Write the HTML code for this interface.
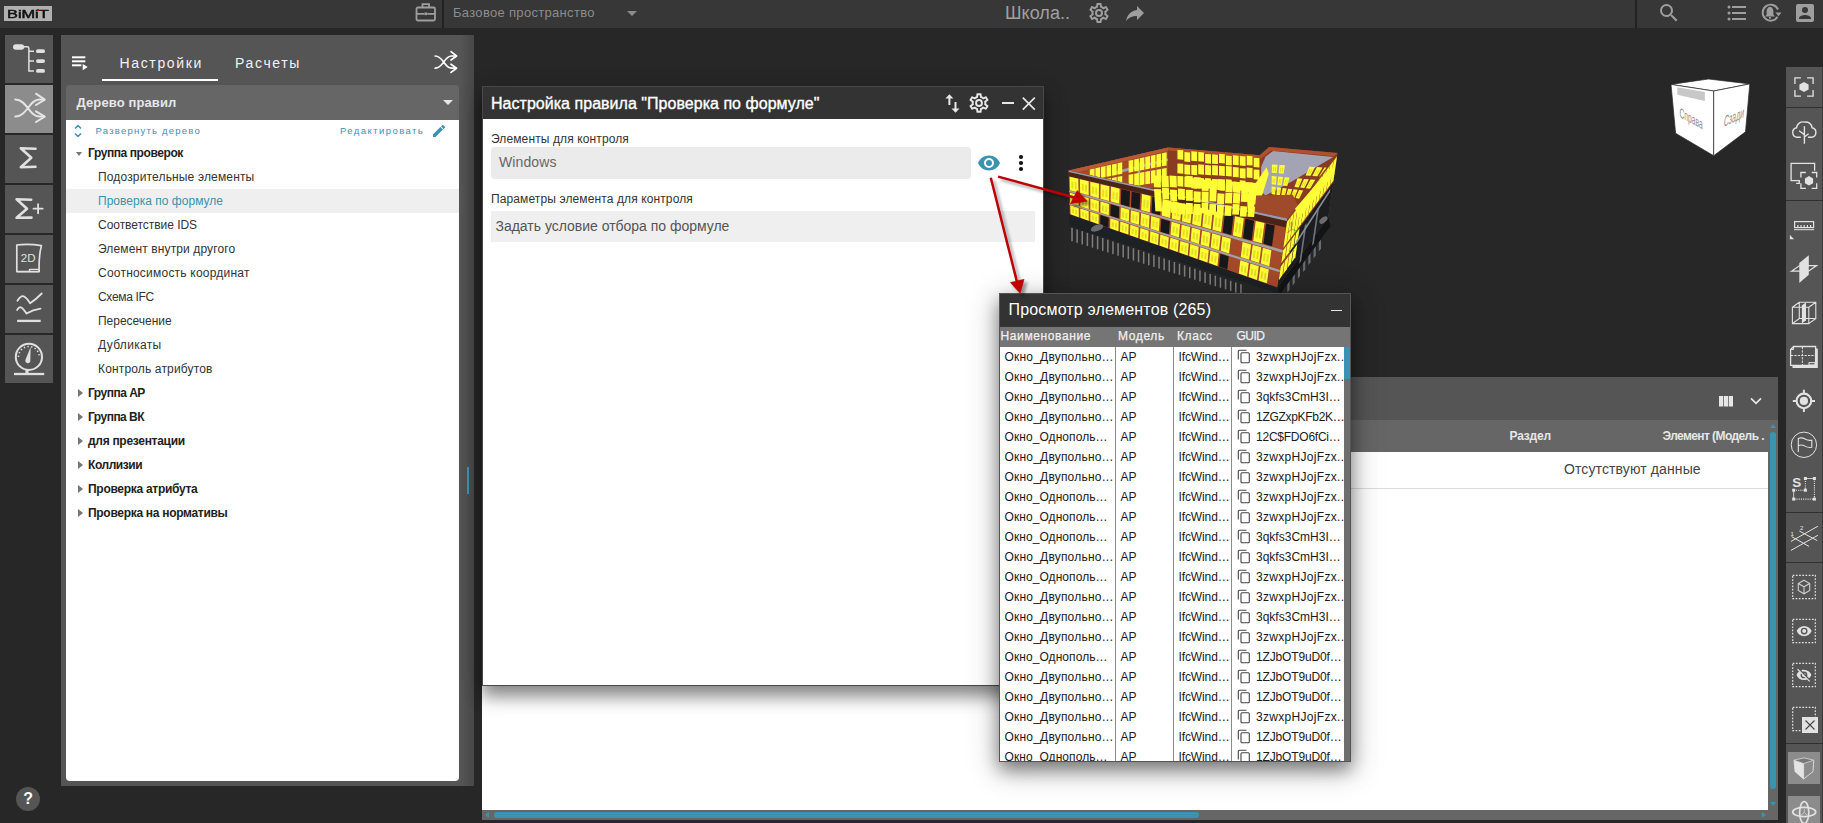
<!DOCTYPE html>
<html lang="ru">
<head>
<meta charset="utf-8">
<title>BIMIT</title>
<style>
*{box-sizing:border-box;margin:0;padding:0}
html,body{width:1823px;height:823px;overflow:hidden;background:#272727;font-family:"Liberation Sans",sans-serif;}
.abs{position:absolute}
.t{position:absolute;white-space:nowrap;line-height:1;transform-origin:0 50%}
#topbar{left:0;top:0;width:1823px;height:28px;background:#373737}
#logo{left:4px;top:6px;width:48px;height:15px;background:#b0b0b0;color:#111;overflow:hidden}
#logo span{position:absolute;left:3px;top:1.500px;font-size:11.500px;line-height:12px;transform:scaleX(1.42);transform-origin:0 0;-webkit-text-stroke:0.5px #111}
#logo i{position:absolute;left:32.700px;top:3.100px;width:2.300px;height:2.200px;background:#c80000}
.lbtn{position:absolute;left:5px;width:48px;height:48px;background:#555}
.lbtn.act{background:#8c8c8c}
#lpanel{left:61px;top:35px;width:413px;height:751px;background:#555}
#tree{left:66px;top:85px;width:393px;height:696px;background:linear-gradient(#666 0,#666 35px,#fff 35px);border-radius:4px;overflow:hidden}
#treehdr{left:0;top:0;width:393px;height:35px;background:#666}
.row{position:absolute;left:0;width:393px;height:24px}
.row.sel{background:#efefef}
.g{font-weight:bold;font-size:12px;color:#222;left:22px}
.i{font-size:12px;color:#333;left:32px}
.tri{position:absolute;left:11px;width:0;height:0;border-style:solid}
.tri.r{border-width:4px 0 4px 5px;border-color:transparent transparent transparent #757575;top:8px;left:12px}
.tri.d{border-width:4px 3.500px 0 3.500px;border-color:#757575 transparent transparent transparent;top:10.500px;left:9.500px}
#view{left:482px;top:28px;width:1305px;height:795px;overflow:hidden}
#dlg1{left:482px;top:86px;width:562px;height:600px;background:#fff;border:1px solid #484848;box-shadow:0 10px 16px rgba(0,0,0,.45),0 6px 28px 2px rgba(0,0,0,.08)}
#dlg1h{left:0;top:0;width:560px;height:31.500px;background:#333}
.fld{position:absolute;background:#ebebeb;border-radius:4px}
#dlg2{left:999px;top:293px;width:352px;height:469px;background:#fff;border:1px solid #555;box-shadow:0 8px 18px rgba(0,0,0,.5),0 6px 34px 4px rgba(0,0,0,.12);overflow:hidden}
#dlg2h{left:0;top:0;width:350px;height:33px;background:#333}
#dlg2c{left:0;top:33px;width:350px;height:20px;background:#757575}
#bpanel{left:482px;top:377px;width:1296px;height:446px;background:#555}
#rtb{left:1786px;top:67px;width:37px;height:756px;background:#555}
.ch{font-size:12px;color:#f0f0f0;-webkit-text-stroke:0.25px #f0f0f0}
.rc{font-size:12px;color:#1a1a1a}
#tx_base{letter-spacing:0.314px}
#tx_school{letter-spacing:0.047px}
#tx_tab1{letter-spacing:1.655px}
#tx_tab2{letter-spacing:1.633px}
#tx_treehdr{letter-spacing:0.111px}
#tx_expand{letter-spacing:1.230px}
#tx_edit{letter-spacing:1.430px}
#tx_r0{letter-spacing:-0.419px}
#tx_r1{letter-spacing:0.154px}
#tx_r2{letter-spacing:0.022px}
#tx_r3{letter-spacing:-0.041px}
#tx_r4{letter-spacing:0.123px}
#tx_r5{letter-spacing:0.221px}
#tx_r6{letter-spacing:-0.324px}
#tx_r7{letter-spacing:-0.026px}
#tx_r8{letter-spacing:0.323px}
#tx_r9{letter-spacing:0.154px}
#tx_r10{letter-spacing:-0.510px}
#tx_r11{letter-spacing:-0.513px}
#tx_r12{letter-spacing:-0.296px}
#tx_r13{letter-spacing:-0.443px}
#tx_r14{letter-spacing:-0.289px}
#tx_r15{letter-spacing:-0.300px}
#tx_d1title{letter-spacing:0.030px}
#tx_d1l1{letter-spacing:0.115px}
#tx_d1v1{letter-spacing:0.101px}
#tx_d1l2{letter-spacing:0.114px}
#tx_d1v2{letter-spacing:-0.013px}
#tx_d2title{letter-spacing:0.168px}
#tx_c1{letter-spacing:0.619px}
#tx_c2{letter-spacing:0.625px}
#tx_c3{letter-spacing:0.606px}
#tx_c4{letter-spacing:-0.500px}
.nD{letter-spacing:0.203px}
.nO{letter-spacing:0.077px}
.cI{letter-spacing:-0.116px}
.ga{letter-spacing:0.313px}
.gb{letter-spacing:0.009px}
.gc{letter-spacing:-0.293px}
.gd{letter-spacing:-0.233px}
.ge{letter-spacing:-0.143px}
#tx_b1{letter-spacing:-0.191px}
#tx_b2{letter-spacing:-0.584px}
#tx_b3{letter-spacing:0.111px}
</style>
</head>
<body>
<div class="abs" id="topbar"></div>
<div class="abs" id="logo"><span>BiMiT</span><i></i></div>
<!-- briefcase -->
<svg class="abs" style="left:415px;top:2px" width="22" height="20" viewBox="0 0 22 20" fill="none" stroke="#9e9e9e" stroke-width="1.8">
 <rect x="1.5" y="5.5" width="18.5" height="13" rx="1.5"/><path d="M7.5 5.5V2.2h6.5V5.5M1.5 11.8h7.5M12.500 11.8H20"/><rect x="9.3" y="10.5" width="3" height="2.6" fill="#9e9e9e" stroke="none"/>
</svg>
<div class="abs" style="left:442px;top:0;width:2px;height:28px;background:#222"></div>
<div class="t" id="tx_base" style="left:453px;top:6px;font-size:13px;color:#8c8c8c">Базовое пространство</div>
<div class="abs" style="left:627px;top:11px;width:0;height:0;border-style:solid;border-width:5px 5px 0 5px;border-color:#8c8c8c transparent transparent transparent"></div>
<div class="t" id="tx_school" style="left:1005px;top:4px;font-size:18px;color:#a0a0a0">Школа..</div>
<!-- gear top -->
<svg class="abs" style="left:1087px;top:1px" width="24" height="24" viewBox="0 0 24 24" fill="#9e9e9e"><path d="M12 8a4 4 0 0 1 4 4 4 4 0 0 1-4 4 4 4 0 0 1-4-4 4 4 0 0 1 4-4m0 2a2 2 0 0 0-2 2 2 2 0 0 0 2 2 2 2 0 0 0 2-2 2 2 0 0 0-2-2m-2 12c-.25 0-.46-.18-.5-.42l-.37-2.650c-.63-.25-1.170-.59-1.690-.99l-2.490 1.010c-.22.080-.49 0-.61-.22l-2-3.460c-.130-.22-.070-.49.120-.64l2.110-1.660L4.500 12l.070-1-2.110-1.630c-.190-.150-.25-.42-.120-.64l2-3.460c.120-.22.390-.31.610-.22l2.490 1c.52-.39 1.060-.73 1.690-.98l.37-2.650c.04-.24.25-.42.500-.42h4c.25 0 .46.180.5.420l.37 2.650c.63.250 1.170.59 1.690.98l2.490-1c.22-.09.490 0 .61.220l2 3.460c.130.220.070.490-.12.640L19.430 11l.07 1-.07 1 2.110 1.630c.190.150.25.420.12.640l-2 3.460c-.12.220-.39.310-.61.220l-2.490-1c-.52.390-1.060.730-1.690.98l-.37 2.650c-.04.240-.25.420-.5.420h-4m1.250-18l-.37 2.610c-1.200.25-2.260.89-3.030 1.780L5.440 7.350l-.75 1.300L6.800 10.200a5.550 5.550 0 0 0 0 3.600l-2.120 1.560.75 1.300 2.430-1.040c.77.880 1.820 1.520 3.010 1.760l.37 2.620h1.520l.37-2.610c1.190-.25 2.240-.89 3.010-1.770l2.430 1.040.75-1.300-2.120-1.550c.4-1.170.4-2.440 0-3.610l2.110-1.550-.75-1.300-2.410 1.040a5.420 5.420 0 0 0-3.030-1.770L12.750 4h-1.500z"/></svg>
<!-- share -->
<svg class="abs" style="left:1123px;top:2px" width="24" height="24" viewBox="0 0 24 24" fill="#9e9e9e"><path d="M21 11l-7-7v4C7 9 4 14 3 19c2.500-3.500 6-5.100 11-5.100V18l7-7z"/></svg>
<div class="abs" style="left:1635px;top:0;width:2px;height:28px;background:#222"></div>
<!-- search -->
<svg class="abs" style="left:1657px;top:1px" width="24" height="24" viewBox="0 0 24 24" fill="#9e9e9e"><path d="M9.500 3A6.500 6.500 0 0 1 16 9.500c0 1.610-.59 3.090-1.560 4.230l.27.270h.79l5 5-1.500 1.500-5-5v-.79l-.27-.27A6.516 6.516 0 0 1 9.500 16 6.500 6.500 0 0 1 3 9.500 6.500 6.500 0 0 1 9.500 3m0 2C7 5 5 7 5 9.500S7 14 9.500 14 14 12 14 9.500 12 5 9.500 5z"/></svg>
<!-- list -->
<svg class="abs" style="left:1725px;top:1px" width="24" height="24" viewBox="0 0 24 24" fill="#9e9e9e"><path d="M7 5h14v2H7V5m0 8v-2h14v2H7M4 4.500A1.500 1.500 0 0 1 5.500 6 1.500 1.500 0 0 1 4 7.500 1.500 1.500 0 0 1 2.500 6 1.500 1.500 0 0 1 4 4.500m0 6A1.500 1.500 0 0 1 5.500 12 1.500 1.500 0 0 1 4 13.500 1.500 1.500 0 0 1 2.500 12 1.500 1.500 0 0 1 4 10.500M7 19v-2h14v2H7m-3-2.500A1.500 1.500 0 0 1 5.500 18 1.500 1.500 0 0 1 4 19.500 1.500 1.500 0 0 1 2.500 18 1.500 1.500 0 0 1 4 16.500z"/></svg>
<!-- bell refresh -->
<svg class="abs" style="left:1759px;top:1px" width="24" height="24" viewBox="0 0 24 24" fill="none" stroke="#9e9e9e"><path d="M18.500 15.800A8 8 0 1 1 19 8.500" stroke-width="1.900"/><path d="M16.500 11.500h6l-3 3.800z" fill="#9e9e9e" stroke="none"/><path d="M11 5.800c-2.400.5-3.400 2.300-3.400 4.700v3.200L6.400 15v.6h9.200V15l-1.200-1.300v-3.200c0-2.400-1-4.200-3.400-4.700z" fill="#9e9e9e" stroke="none"/><circle cx="11" cy="16.800" r="1.100" fill="#9e9e9e" stroke="none"/></svg>
<!-- account -->
<svg class="abs" style="left:1793px;top:1px" width="24" height="24" viewBox="0 0 24 24" fill="#9e9e9e"><path d="M6 17c0-2 4-3.100 6-3.100s6 1.100 6 3.100v1H6m9-9a3 3 0 0 1-3 3 3 3 0 0 1-3-3 3 3 0 0 1 3-3 3 3 0 0 1 3 3M3 5v14a2 2 0 0 0 2 2h14a2 2 0 0 0 2-2V5a2 2 0 0 0-2-2H5a2 2 0 0 0-2 2z"/></svg>

<!-- LEFT TOOLBAR -->
<div class="lbtn" style="top:35px"><svg width="48" height="48" viewBox="0 0 48 48" fill="none" stroke="#e0e0e0" stroke-width="1.5">
 <rect x="8" y="9.200" width="11.200" height="5.600" rx="2.800" fill="#e0e0e0" stroke="none"/>
 <path d="M18 11.800h4.300q1.600 0 1.600 1.600V36h5M24 16.200h5M24 26.100h5"/>
 <rect x="31" y="14.300" width="9" height="3.700" rx="1.850" fill="#e0e0e0" stroke="none"/>
 <rect x="31" y="24.200" width="9" height="3.700" rx="1.850" fill="#e0e0e0" stroke="none"/>
 <rect x="31" y="34.100" width="9" height="3.700" rx="1.850" fill="#e0e0e0" stroke="none"/>
</svg></div>
<div class="lbtn act" style="top:85px"><svg width="48" height="48" viewBox="0 0 48 48" fill="none" stroke="#e4e4e4" stroke-width="2" stroke-linecap="round" stroke-linejoin="round">
 <path d="M10.300 14.600C22 14.600 24 31.600 34.500 31.600H39M10.300 31.600C22 31.600 24 14.600 34.500 14.600H39"/>
 <path d="M31 8.700l8.800 5.900L31 20M31 26.300l8.800 5.300L31 37"/>
</svg></div>
<div class="lbtn" style="top:135px"><svg width="48" height="48" viewBox="0 0 48 48" fill="none" stroke="#e0e0e0" stroke-width="2.600" stroke-linecap="round" stroke-linejoin="round">
 <path d="M30.500 13.800L15.800 13.300L26.300 22.700L15.800 32.200L30.500 31.800"/>
</svg></div>
<div class="lbtn" style="top:185px"><svg width="48" height="48" viewBox="0 0 48 48" fill="none" stroke="#e0e0e0" stroke-width="2.600" stroke-linecap="round" stroke-linejoin="round">
 <path d="M26.200 14.700L11.600 14.200L22 23.700L11.600 32.800L26.500 32.600"/>
 <path d="M28.500 23.700h9.200M33.100 19.100v9.200" stroke-width="1.800"/>
</svg></div>
<div class="lbtn" style="top:235px"><svg width="48" height="48" viewBox="0 0 48 48" fill="none" stroke="#e0e0e0" stroke-width="1.700" stroke-linejoin="round">
 <path d="M11.800 10q12-1.400 24.600.6c-2 8-2.600 17-2.200 26H11.800z"/>
 <path d="M12 36.600h22M24.500 36v-1.600h9.500" stroke-width="1.400"/>
 <text x="15.800" y="27" font-family="Liberation Sans, sans-serif" font-size="11.500" fill="#e0e0e0" stroke="none">2D</text>
</svg></div>
<div class="lbtn" style="top:285px"><svg width="48" height="48" viewBox="0 0 48 48" fill="none" stroke="#e0e0e0" stroke-width="1.800" stroke-linecap="round" stroke-linejoin="round">
 <path d="M12.400 15.800q3.500-5.500 6.300-4.500t6.400 7q6-4 11.600-9.800"/>
 <path d="M12.100 25q2.200-3.600 4.200-2.500t5.200 6.100q6.500-4 14-4.900"/>
 <path d="M12.100 35.900h23.600" stroke-width="2.300" stroke-linecap="butt"/>
</svg></div>
<div class="lbtn" style="top:335px"><svg width="48" height="48" viewBox="0 0 48 48" fill="none" stroke="#e0e0e0" stroke-width="2">
 <circle cx="23.900" cy="21.900" r="13.100"/>
 <path d="M9 39h30.200" stroke-width="2.300"/>
 <path d="M22 35v4" stroke-width="3.200"/>
 <path d="M13.500 21.900A10.400 10.400 0 0 1 34.300 21.900" stroke-width="1.600" stroke-dasharray="1.300 2.400" transform="rotate(0 23.900 21.900)"/>
 <path d="M25.600 12L20.300 25.300a2.600 2.600 0 0 0 5 1.300z" fill="#e0e0e0" stroke="none"/>
</svg></div>
<!-- HELP -->
<div class="abs" style="left:16px;top:787px;width:24.200px;height:24.200px;border-radius:50%;background:#555"></div>
<div class="t" style="left:23.200px;top:791px;font-size:16px;font-weight:bold;color:#fff">?</div>
<!-- LEFT PANEL -->
<div class="abs" id="lpanel"><div class="abs" style="left:399px;top:0;width:14px;height:751px;background:linear-gradient(90deg,rgba(0,0,0,0),rgba(0,0,0,.16))"></div></div>
<svg class="abs" style="left:71px;top:55px" width="18" height="16" viewBox="0 0 18 16" fill="#fff"><rect x="1" y="1.300" width="13.300" height="2"/><rect x="1" y="5.300" width="13.300" height="2"/><rect x="1" y="9.300" width="9.300" height="2"/><path d="M11.700 9v6.200l5-3.100z"/></svg>
<div class="t" id="tx_tab1" style="left:119.500px;top:56px;font-size:14px;color:#f2f2f2">Настройки</div>
<div class="t" id="tx_tab2" style="left:235px;top:56px;font-size:14px;color:#f2f2f2">Расчеты</div>
<div class="abs" style="left:102px;top:79px;width:116px;height:2px;background:#fff"></div>
<svg class="abs" style="left:432px;top:50px" width="28" height="26" viewBox="0 0 28 26" fill="none" stroke="#fff" stroke-width="1.700" stroke-linecap="round" stroke-linejoin="round"><path d="M3.200 6C11.500 6 12 18.200 19.500 18.200h4.500M3.200 18.200C11.500 18.200 12 6 19.500 6h4.500"/><path d="M19 1.700l5.600 4.300L19 10M19 14.200l5.600 4L19 22.400"/></svg>
<div class="abs" style="left:467.300px;top:466.500px;width:1.700px;height:27.500px;background:#3a93b0"></div>
<div class="abs" id="tree">
  <div class="abs" id="treehdr"></div>
  <div class="t" id="tx_treehdr" style="left:10.500px;top:11px;font-size:13px;font-weight:bold;color:#e6e6e6">Дерево правил</div>
  <div class="abs" style="left:376.500px;top:15px;width:0;height:0;border-style:solid;border-width:5px 5px 0 5px;border-color:#e6e6e6 transparent transparent transparent"></div>
  <svg class="abs" style="left:6px;top:38px" width="12" height="16" viewBox="0 0 12 16" fill="none" stroke="#3a93b0" stroke-width="1.500"><path d="M3 5.500L6 2.600l3 2.900M3 10.500l3 2.900 3-2.900"/></svg>
  <div class="t" id="tx_expand" style="left:29.500px;top:41px;font-size:9.500px;color:#3a93b0">Развернуть дерево</div>
  <div class="t" id="tx_edit" style="left:274px;top:41px;font-size:9.500px;color:#3a93b0">Редактировать</div>
  <svg class="abs" style="left:365px;top:38px" width="16" height="16" viewBox="0 0 24 24" fill="#3a93b0"><path d="M20.710 7.040c.39-.39.390-1.040 0-1.410l-2.340-2.340c-.37-.39-1.020-.39-1.410 0l-1.840 1.830 3.750 3.750M3 17.250V21h3.750L17.810 9.930l-3.750-3.750L3 17.250z"/></svg>
  <div class="row" style="top:56px"><i class="tri d"></i><div class="t g" id="tx_r0" style="top:6px">Группа проверок</div></div>
  <div class="row" style="top:80px"><div class="t i" id="tx_r1" style="top:6px">Подозрительные элементы</div></div>
  <div class="row sel" style="top:104px"><div class="t i" id="tx_r2" style="top:6px;color:#3a93b0">Проверка по формуле</div></div>
  <div class="row" style="top:128px"><div class="t i" id="tx_r3" style="top:6px">Соответствие IDS</div></div>
  <div class="row" style="top:152px"><div class="t i" id="tx_r4" style="top:6px">Элемент внутри другого</div></div>
  <div class="row" style="top:176px"><div class="t i" id="tx_r5" style="top:6px">Соотносимость координат</div></div>
  <div class="row" style="top:200px"><div class="t i" id="tx_r6" style="top:6px">Схема IFC</div></div>
  <div class="row" style="top:224px"><div class="t i" id="tx_r7" style="top:6px">Пересечение</div></div>
  <div class="row" style="top:248px"><div class="t i" id="tx_r8" style="top:6px">Дубликаты</div></div>
  <div class="row" style="top:272px"><div class="t i" id="tx_r9" style="top:6px">Контроль атрибутов</div></div>
  <div class="row" style="top:296px"><i class="tri r"></i><div class="t g" id="tx_r10" style="top:6px">Группа АР</div></div>
  <div class="row" style="top:320px"><i class="tri r"></i><div class="t g" id="tx_r11" style="top:6px">Группа ВК</div></div>
  <div class="row" style="top:344px"><i class="tri r"></i><div class="t g" id="tx_r12" style="top:6px">для презентации</div></div>
  <div class="row" style="top:368px"><i class="tri r"></i><div class="t g" id="tx_r13" style="top:6px">Коллизии</div></div>
  <div class="row" style="top:392px"><i class="tri r"></i><div class="t g" id="tx_r14" style="top:6px">Проверка атрибута</div></div>
  <div class="row" style="top:416px"><i class="tri r"></i><div class="t g" id="tx_r15" style="top:6px">Проверка на нормативы</div></div>
</div>
<!-- 3D MODEL -->
<svg class="abs" style="left:1050px;top:130px;filter:blur(.3px)" width="310" height="180" viewBox="0 0 1417 823">
<rect x="97.0" y="446.7" width="7" height="62.0" fill="#7d7d7d"/>
<rect x="120.4" y="454.5" width="7" height="61.5" fill="#7d7d7d"/>
<rect x="143.8" y="462.3" width="7" height="61.0" fill="#7d7d7d"/>
<rect x="167.2" y="470.2" width="7" height="60.5" fill="#7d7d7d"/>
<rect x="190.6" y="478.0" width="7" height="60.0" fill="#7d7d7d"/>
<rect x="214.0" y="485.9" width="7" height="59.5" fill="#7d7d7d"/>
<rect x="237.4" y="493.7" width="7" height="59.0" fill="#7d7d7d"/>
<rect x="260.8" y="501.5" width="7" height="58.5" fill="#7d7d7d"/>
<rect x="284.2" y="509.4" width="7" height="58.0" fill="#7d7d7d"/>
<rect x="307.6" y="517.2" width="7" height="57.5" fill="#7d7d7d"/>
<rect x="331.0" y="525.1" width="7" height="57.0" fill="#7d7d7d"/>
<rect x="354.4" y="532.9" width="7" height="56.5" fill="#7d7d7d"/>
<rect x="377.8" y="540.7" width="7" height="56.0" fill="#7d7d7d"/>
<rect x="401.2" y="548.6" width="7" height="55.5" fill="#7d7d7d"/>
<rect x="424.6" y="556.4" width="7" height="55.0" fill="#7d7d7d"/>
<rect x="448.0" y="564.3" width="7" height="54.5" fill="#7d7d7d"/>
<rect x="471.4" y="572.1" width="7" height="54.0" fill="#7d7d7d"/>
<rect x="494.8" y="579.9" width="7" height="53.5" fill="#7d7d7d"/>
<rect x="518.2" y="587.8" width="7" height="53.0" fill="#7d7d7d"/>
<rect x="541.6" y="595.6" width="7" height="52.5" fill="#7d7d7d"/>
<rect x="565.0" y="603.5" width="7" height="52.0" fill="#7d7d7d"/>
<rect x="588.4" y="611.3" width="7" height="51.5" fill="#7d7d7d"/>
<rect x="611.8" y="619.1" width="7" height="51.0" fill="#7d7d7d"/>
<rect x="635.2" y="627.0" width="7" height="50.5" fill="#7d7d7d"/>
<rect x="658.6" y="634.8" width="7" height="50.0" fill="#7d7d7d"/>
<rect x="682.0" y="642.6" width="7" height="49.5" fill="#7d7d7d"/>
<rect x="705.4" y="650.5" width="7" height="49.0" fill="#7d7d7d"/>
<rect x="728.8" y="658.3" width="7" height="48.5" fill="#7d7d7d"/>
<rect x="752.2" y="666.2" width="7" height="48.0" fill="#7d7d7d"/>
<rect x="775.6" y="674.0" width="7" height="47.5" fill="#7d7d7d"/>
<rect x="799.0" y="681.8" width="7" height="47.0" fill="#7d7d7d"/>
<rect x="822.4" y="689.7" width="7" height="46.5" fill="#7d7d7d"/>
<rect x="845.8" y="697.5" width="7" height="46.0" fill="#7d7d7d"/>
<rect x="869.2" y="705.4" width="7" height="45.5" fill="#7d7d7d"/>
<polygon points="1085.0,700.0 1095.0,687.0 1095.0,730.0 1085.0,743.0" fill="#6a6d72"/>
<polygon points="1109.0,668.8 1119.0,655.8 1119.0,698.8 1109.0,711.8" fill="#6a6d72"/>
<polygon points="1133.0,637.6 1143.0,624.6 1143.0,667.6 1133.0,680.6" fill="#6a6d72"/>
<polygon points="1157.0,606.4 1167.0,593.4 1167.0,636.4 1157.0,649.4" fill="#6a6d72"/>
<polygon points="1181.0,575.2 1191.0,562.2 1191.0,605.2 1181.0,618.2" fill="#6a6d72"/>
<polygon points="1205.0,544.0 1215.0,531.0 1215.0,574.0 1205.0,587.0" fill="#6a6d72"/>
<polygon points="1229.0,512.8 1239.0,499.8 1239.0,542.8 1229.0,555.8" fill="#6a6d72"/>
<polygon points="86.0,383.0 1040.0,716.0 1052.0,750.0 92.0,442.0" fill="#1e2124"/>
<polygon points="1040.0,716.0 1272.0,398.0 1282.0,440.0 1052.0,750.0" fill="#121416"/>
<polygon points="540.0,80.0 958.0,116.0 1002.0,78.0 1315.0,105.0 1085.0,405.0 85.0,185.0" fill="#8a3c22"/>
<polygon points="985.0,122.0 1020.0,96.0 1295.0,124.0 1105.0,235.0 985.0,300.0 930.0,250.0" fill="#a3a3b4"/>
<polygon points="85.0,185.0 540.0,80.0 540.0,250.0 100.0,330.0" fill="#a4492a"/>
<polygon points="85.0,185.0 540.0,80.0 548.0,93.0 96.0,199.0" fill="#b85a36"/>
<polygon points="290.0,190.0 540.0,130.0 540.0,142.0 290.0,204.0" fill="#9d9db0"/>
<polygon points="400.0,150.0 412.0,148.0 412.0,260.0 400.0,262.0" fill="#9d9db0"/>
<polygon points="540.0,80.0 965.0,116.0 965.0,300.0 540.0,250.0" fill="#8a3c22"/>
<polygon points="540.0,80.0 958.0,116.0 1002.0,78.0 1315.0,105.0 1300.0,120.0 1010.0,94.0 965.0,130.0 540.0,94.0" fill="#b0502e"/>
<polygon points="182.0,180.2 203.3,175.5 203.3,224.5 182.0,228.6" fill="#ffff38"/>
<polygon points="207.4,174.6 228.7,169.8 228.7,219.7 207.4,223.8" fill="#ffff38"/>
<polygon points="232.7,168.9 254.0,164.1 254.0,215.0 232.7,219.0" fill="#ffff38"/>
<polygon points="258.1,163.2 279.4,158.4 279.4,210.2 258.1,214.2" fill="#ffff38"/>
<polygon points="283.5,157.5 304.8,152.7 304.8,205.4 283.5,209.4" fill="#ffff38"/>
<polygon points="308.8,151.8 330.1,147.0 330.1,200.6 308.8,204.6" fill="#ffff38"/>
<polygon points="359.5,140.4 380.8,135.6 380.8,191.0 359.5,195.0" fill="#ffff38"/>
<polygon points="384.9,134.7 406.2,129.9 406.2,186.2 384.9,190.2" fill="#ffff38"/>
<polygon points="410.2,129.0 431.5,124.2 431.5,181.4 410.2,185.4" fill="#ffff38"/>
<polygon points="435.6,123.3 456.9,118.5 456.9,176.6 435.6,180.6" fill="#ffff38"/>
<polygon points="461.0,117.6 482.3,112.8 482.3,171.8 461.0,175.8" fill="#ffff38"/>
<polygon points="486.3,111.9 507.6,107.1 507.6,167.0 486.3,171.0" fill="#ffff38"/>
<polygon points="511.7,106.2 533.0,101.5 533.0,162.2 511.7,166.2" fill="#ffff38"/>
<polygon points="182.0,237.5 203.3,233.6 203.3,282.7 182.0,285.8" fill="#ffff38"/>
<polygon points="207.4,232.8 228.7,229.0 228.7,278.9 207.4,282.1" fill="#ffff38"/>
<polygon points="232.7,228.2 254.0,224.3 254.0,275.2 232.7,278.3" fill="#ffff38"/>
<polygon points="258.1,223.6 279.4,219.7 279.4,271.5 258.1,274.6" fill="#ffff38"/>
<polygon points="283.5,219.0 304.8,215.1 304.8,267.7 283.5,270.9" fill="#ffff38"/>
<polygon points="308.8,214.3 330.1,210.4 330.1,264.0 308.8,267.1" fill="#ffff38"/>
<polygon points="359.5,205.1 380.8,201.2 380.8,256.5 359.5,259.7" fill="#ffff38"/>
<polygon points="384.9,200.4 406.2,196.5 406.2,252.8 384.9,255.9" fill="#ffff38"/>
<polygon points="410.2,195.8 431.5,191.9 431.5,249.0 410.2,252.2" fill="#ffff38"/>
<polygon points="435.6,191.2 456.9,187.3 456.9,245.3 435.6,248.4" fill="#ffff38"/>
<polygon points="461.0,186.5 482.3,182.6 482.3,241.6 461.0,244.7" fill="#ffff38"/>
<polygon points="486.3,181.9 507.6,178.0 507.6,237.8 486.3,241.0" fill="#ffff38"/>
<polygon points="511.7,177.3 533.0,173.4 533.0,234.1 511.7,237.2" fill="#ffff38"/>
<polygon points="582.5,90.9 609.1,93.0 609.1,136.0 582.5,133.9" fill="#ffff38"/>
<polygon points="614.2,100.9 640.8,103.0 640.8,146.0 614.2,143.9" fill="#ffff38"/>
<polygon points="645.9,97.7 672.5,99.8 672.5,142.8 645.9,140.7" fill="#ffff38"/>
<polygon points="677.5,100.3 704.1,102.4 704.1,145.4 677.5,143.3" fill="#ffff38"/>
<polygon points="709.2,109.3 735.8,111.4 735.8,154.4 709.2,152.3" fill="#ffff38"/>
<polygon points="740.9,110.9 767.5,113.0 767.5,156.0 740.9,153.9" fill="#ffff38"/>
<polygon points="772.5,108.4 799.1,110.5 799.1,153.5 772.5,151.4" fill="#ffff38"/>
<polygon points="804.2,116.7 830.8,118.8 830.8,161.8 804.2,159.7" fill="#ffff38"/>
<polygon points="835.9,115.5 862.5,117.6 862.5,160.6 835.9,158.5" fill="#ffff38"/>
<polygon points="867.5,119.2 894.1,121.3 894.1,164.3 867.5,162.2" fill="#ffff38"/>
<polygon points="899.2,117.7 925.8,119.8 925.8,162.8 899.2,160.7" fill="#ffff38"/>
<polygon points="930.9,126.5 957.5,128.6 957.5,171.6 930.9,169.5" fill="#ffff38"/>
<polygon points="582.5,152.7 609.1,154.8 609.1,200.0 582.5,197.9" fill="#ffff38"/>
<polygon points="614.2,157.6 640.8,159.7 640.8,204.9 614.2,202.8" fill="#ffff38"/>
<polygon points="645.9,159.5 672.5,161.6 672.5,206.7 645.9,204.6" fill="#ffff38"/>
<polygon points="677.5,156.9 704.1,159.0 704.1,204.1 677.5,202.0" fill="#ffff38"/>
<polygon points="709.2,159.9 735.8,162.0 735.8,207.2 709.2,205.1" fill="#ffff38"/>
<polygon points="740.9,160.7 767.5,162.8 767.5,208.0 740.9,205.9" fill="#ffff38"/>
<polygon points="772.5,163.1 799.1,165.2 799.1,210.3 772.5,208.2" fill="#ffff38"/>
<polygon points="804.2,164.9 830.8,167.0 830.8,212.1 804.2,210.0" fill="#ffff38"/>
<polygon points="835.9,169.4 862.5,171.5 862.5,216.6 835.9,214.5" fill="#ffff38"/>
<polygon points="867.5,174.5 894.1,176.6 894.1,221.7 867.5,219.6" fill="#ffff38"/>
<polygon points="899.2,171.8 925.8,173.9 925.8,219.1 899.2,217.0" fill="#ffff38"/>
<polygon points="930.9,180.1 957.5,182.2 957.5,227.4 930.9,225.3" fill="#ffff38"/>
<polygon points="582.5,209.9 609.1,212.0 609.1,259.3 582.5,257.2" fill="#ffff38"/>
<polygon points="614.2,212.2 640.8,214.3 640.8,261.6 614.2,259.5" fill="#ffff38"/>
<polygon points="645.9,219.0 672.5,221.1 672.5,268.4 645.9,266.3" fill="#ffff38"/>
<polygon points="677.5,218.6 704.1,220.7 704.1,268.0 677.5,265.9" fill="#ffff38"/>
<polygon points="709.2,219.7 735.8,221.8 735.8,269.1 709.2,267.0" fill="#ffff38"/>
<polygon points="740.9,223.6 767.5,225.7 767.5,273.0 740.9,270.9" fill="#ffff38"/>
<polygon points="772.5,228.1 799.1,230.2 799.1,277.5 772.5,275.4" fill="#ffff38"/>
<polygon points="804.2,225.0 830.8,227.1 830.8,274.4 804.2,272.3" fill="#ffff38"/>
<polygon points="835.9,235.4 862.5,237.5 862.5,284.8 835.9,282.7" fill="#ffff38"/>
<polygon points="867.5,229.7 894.1,231.8 894.1,279.1 867.5,277.0" fill="#ffff38"/>
<polygon points="899.2,238.4 925.8,240.5 925.8,287.8 899.2,285.7" fill="#ffff38"/>
<polygon points="930.9,241.8 957.5,243.9 957.5,291.2 930.9,289.1" fill="#ffff38"/>
<polygon points="1014.5,157.8 1039.9,159.2 1036.9,197.1 1014.0,195.3" fill="#ffff38"/>
<polygon points="1019.3,169.3 1024.7,169.7 1023.9,188.5 1018.8,188.2" fill="#e4de20"/>
<polygon points="1028.6,169.9 1034.0,170.3 1032.8,189.2 1027.6,188.8" fill="#e4de20"/>
<polygon points="1048.8,159.7 1074.2,161.2 1067.7,199.6 1044.9,197.8" fill="#ffff38"/>
<polygon points="1052.5,171.4 1058.0,171.8 1055.5,190.9 1050.3,190.5" fill="#e4de20"/>
<polygon points="1061.9,172.0 1067.3,172.4 1064.4,191.5 1059.2,191.2" fill="#e4de20"/>
<polygon points="1186.0,167.6 1211.4,169.1 1191.2,209.3 1168.4,207.5" fill="#ffff38"/>
<polygon points="1185.7,179.9 1191.1,180.2 1181.7,200.3 1176.6,199.9" fill="#e4de20"/>
<polygon points="1195.0,180.5 1200.4,180.8 1190.6,200.9 1185.5,200.5" fill="#e4de20"/>
<polygon points="1220.3,169.6 1245.7,171.0 1222.1,211.7 1199.3,209.9" fill="#ffff38"/>
<polygon points="1218.9,182.0 1224.4,182.3 1213.3,202.6 1208.1,202.2" fill="#e4de20"/>
<polygon points="1228.3,182.6 1233.7,182.9 1222.2,203.3 1217.0,202.9" fill="#e4de20"/>
<polygon points="1254.6,171.5 1280.0,173.0 1253.0,214.2 1230.1,212.4" fill="#ffff38"/>
<polygon points="1252.2,184.1 1257.6,184.4 1244.9,204.9 1239.7,204.6" fill="#e4de20"/>
<polygon points="1261.6,184.7 1267.0,185.0 1253.7,205.6 1248.6,205.2" fill="#e4de20"/>
<polygon points="1013.8,210.3 1035.7,212.3 1032.7,250.2 1013.4,247.9" fill="#ffff38"/>
<polygon points="1017.9,222.0 1022.5,222.5 1021.8,241.3 1017.4,240.8" fill="#e4de20"/>
<polygon points="1025.9,222.8 1030.6,223.2 1029.3,242.2 1025.0,241.7" fill="#e4de20"/>
<polygon points="1043.3,213.0 1065.2,214.9 1058.7,253.3 1039.5,251.0" fill="#ffff38"/>
<polygon points="1046.4,224.8 1051.0,225.2 1048.5,244.3 1044.2,243.8" fill="#e4de20"/>
<polygon points="1054.4,225.6 1059.0,226.0 1056.1,245.2 1051.7,244.7" fill="#e4de20"/>
<polygon points="1072.8,215.6 1094.7,217.5 1084.8,256.4 1065.5,254.1" fill="#ffff38"/>
<polygon points="1074.9,227.6 1079.5,228.0 1075.3,247.3 1070.9,246.8" fill="#e4de20"/>
<polygon points="1082.9,228.3 1087.5,228.8 1082.8,248.2 1078.5,247.7" fill="#e4de20"/>
<polygon points="1131.8,220.8 1153.7,222.8 1136.9,262.6 1117.6,260.3" fill="#ffff38"/>
<polygon points="1131.8,233.1 1136.4,233.5 1128.8,253.3 1124.4,252.8" fill="#e4de20"/>
<polygon points="1139.8,233.9 1144.4,234.3 1136.3,254.2 1132.0,253.7" fill="#e4de20"/>
<polygon points="1161.3,223.5 1183.2,225.4 1163.0,265.7 1143.7,263.4" fill="#ffff38"/>
<polygon points="1160.3,235.8 1164.9,236.3 1155.5,256.3 1151.2,255.8" fill="#e4de20"/>
<polygon points="1168.3,236.6 1172.9,237.1 1163.1,257.2 1158.7,256.7" fill="#e4de20"/>
<polygon points="1190.8,226.1 1212.7,228.0 1189.0,268.8 1169.8,266.5" fill="#ffff38"/>
<polygon points="1188.7,238.6 1193.4,239.1 1182.3,259.3 1177.9,258.8" fill="#e4de20"/>
<polygon points="1196.7,239.4 1201.4,239.8 1189.8,260.2 1185.5,259.7" fill="#e4de20"/>
<polygon points="1013.3,258.4 1031.8,260.8 1029.1,295.7 1012.9,293.0" fill="#ffff38"/>
<polygon points="1016.7,269.3 1020.6,269.8 1019.9,287.2 1016.3,286.6" fill="#e4de20"/>
<polygon points="1023.5,270.2 1027.4,270.8 1026.3,288.2 1022.6,287.6" fill="#e4de20"/>
<polygon points="1038.4,261.6 1056.9,264.0 1051.0,299.3 1034.8,296.6" fill="#ffff38"/>
<polygon points="1040.9,272.6 1044.8,273.2 1042.5,290.7 1038.8,290.2" fill="#e4de20"/>
<polygon points="1047.7,273.6 1051.6,274.1 1048.9,291.7 1045.2,291.2" fill="#e4de20"/>
<polygon points="1063.5,264.9 1082.0,267.3 1073.0,303.0 1056.7,300.3" fill="#ffff38"/>
<polygon points="1065.0,276.0 1068.9,276.5 1065.1,294.3 1061.4,293.7" fill="#e4de20"/>
<polygon points="1071.8,276.9 1075.7,277.5 1071.4,295.3 1067.8,294.7" fill="#e4de20"/>
<polygon points="1088.6,268.1 1107.1,270.5 1094.9,306.6 1078.7,303.9" fill="#ffff38"/>
<polygon points="1089.2,279.3 1093.1,279.9 1087.7,297.9 1084.0,297.3" fill="#e4de20"/>
<polygon points="1096.0,280.3 1099.9,280.8 1094.0,298.9 1090.3,298.3" fill="#e4de20"/>
<polygon points="1113.7,271.3 1132.2,273.7 1116.8,310.3 1100.6,307.6" fill="#ffff38"/>
<polygon points="1113.3,282.7 1117.3,283.2 1110.2,301.5 1106.6,300.9" fill="#e4de20"/>
<polygon points="1120.1,283.6 1124.0,284.2 1116.6,302.5 1112.9,301.9" fill="#e4de20"/>
<polygon points="1138.8,274.5 1157.3,276.9 1138.8,314.0 1122.5,311.3" fill="#ffff38"/>
<polygon points="1137.5,286.1 1141.4,286.6 1132.8,305.0 1129.1,304.4" fill="#e4de20"/>
<polygon points="1144.3,287.0 1148.2,287.5 1139.1,306.0 1135.5,305.4" fill="#e4de20"/>
<polygon points="900.0,300.0 990.0,170.0 1000.0,200.0 945.0,380.0 905.0,385.0" fill="#ffff38"/>
<polygon points="940.0,300.0 1110.0,296.0 1150.0,378.0 1085.0,405.0 930.0,372.0" fill="#a04a2c"/>
<polygon points="930.0,372.0 1085.0,405.0 1083.0,415.0 928.0,382.0" fill="#9a9aa8"/>
<polygon points="85.0,185.0 1085.0,405.0 1040.0,720.0 90.0,385.0" fill="#a4492a"/>
<polygon points="85.0,185.0 1085.0,405.0 1079.2,445.9 85.7,211.0" fill="#4a2418"/>
<polygon points="85.0,185.0 1085.0,405.0 1083.4,416.0 85.2,192.0" fill="#9a9aa8"/>
<polygon points="1085.0,405.0 1315.0,105.0 1272.0,398.0 1040.0,720.0" fill="#93401f"/>
<polygon points="87.3,276.0 1064.5,548.3 1062.7,560.9 87.5,284.0" fill="#a2a2a2"/>
<polygon points="88.7,334.0 1051.5,639.7 1049.9,650.7 88.9,341.0" fill="#a2a2a2"/>
<polygon points="89.5,213.9 129.2,223.3 130.1,285.9 90.9,275.0" fill="#ffff38"/>
<polygon points="97.8,234.2 106.5,236.4 107.1,267.2 98.5,264.9" fill="#e4de20"/>
<polygon points="112.9,238.0 121.6,240.1 122.0,271.3 113.4,268.9" fill="#e4de20"/>
<polygon points="136.8,225.1 176.5,234.6 176.6,298.8 137.5,287.9" fill="#ffff38"/>
<polygon points="144.9,246.0 153.6,248.1 153.8,279.8 145.2,277.5" fill="#e4de20"/>
<polygon points="159.9,249.7 168.6,251.9 168.7,283.8 160.1,281.5" fill="#e4de20"/>
<polygon points="184.1,236.4 223.8,245.8 223.2,311.7 184.1,300.9" fill="#ffff38"/>
<polygon points="192.0,257.7 200.7,259.9 200.5,292.4 191.9,290.1" fill="#e4de20"/>
<polygon points="207.0,261.4 215.7,263.6 215.5,296.4 206.8,294.1" fill="#e4de20"/>
<polygon points="231.3,247.6 271.1,257.1 269.7,324.6 230.6,313.8" fill="#ffff38"/>
<polygon points="239.0,269.4 247.7,271.6 247.2,305.0 238.6,302.7" fill="#e4de20"/>
<polygon points="254.1,273.2 262.8,275.4 262.2,309.0 253.5,306.7" fill="#e4de20"/>
<polygon points="278.6,258.9 318.3,268.3 316.3,337.5 277.2,326.7" fill="#ffff38"/>
<polygon points="286.1,281.2 294.8,283.4 294.0,317.6 285.3,315.2" fill="#e4de20"/>
<polygon points="301.1,284.9 309.8,287.1 308.9,321.6 300.2,319.3" fill="#e4de20"/>
<polygon points="325.9,270.1 365.6,279.6 362.9,350.4 323.7,339.6" fill="#17181a"/>
<polygon points="373.2,281.4 412.9,290.8 409.4,363.4 370.3,352.5" fill="#17181a"/>
<polygon points="420.5,292.6 460.2,302.0 456.0,376.3 416.9,365.4" fill="#ffff38"/>
<polygon points="427.3,316.4 436.0,318.6 434.1,355.3 425.4,353.0" fill="#e4de20"/>
<polygon points="442.3,320.2 451.0,322.3 449.0,359.3 440.3,357.0" fill="#e4de20"/>
<polygon points="467.8,303.8 507.5,313.3 502.5,389.2 463.4,378.3" fill="#17181a"/>
<polygon points="515.1,315.1 554.8,324.5 549.1,402.1 510.0,391.3" fill="#ffff38"/>
<polygon points="521.4,339.9 530.1,342.1 527.5,380.5 518.8,378.1" fill="#e4de20"/>
<polygon points="536.5,343.7 545.2,345.8 542.4,384.5 533.8,382.1" fill="#e4de20"/>
<polygon points="562.3,326.3 602.1,335.8 595.7,415.0 556.5,404.2" fill="#ffff38"/>
<polygon points="568.5,351.7 577.2,353.8 574.2,393.0 565.6,390.7" fill="#e4de20"/>
<polygon points="583.5,355.4 592.2,357.6 589.1,397.0 580.5,394.7" fill="#e4de20"/>
<polygon points="609.6,337.6 649.3,347.0 642.2,427.9 603.1,417.1" fill="#ffff38"/>
<polygon points="615.6,363.4 624.3,365.6 620.9,405.6 612.3,403.3" fill="#e4de20"/>
<polygon points="630.6,367.1 639.3,369.3 635.8,409.6 627.2,407.3" fill="#e4de20"/>
<polygon points="656.9,348.8 696.6,358.3 688.8,440.8 649.7,430.0" fill="#ffff38"/>
<polygon points="662.6,375.1 671.3,377.3 667.6,418.2 659.0,415.9" fill="#e4de20"/>
<polygon points="677.7,378.9 686.4,381.1 682.5,422.2 673.9,419.9" fill="#e4de20"/>
<polygon points="704.2,360.1 743.9,369.5 735.3,453.8 696.2,442.9" fill="#ffff38"/>
<polygon points="709.7,386.9 718.4,389.1 714.3,430.8 705.7,428.4" fill="#e4de20"/>
<polygon points="724.7,390.6 733.4,392.8 729.2,434.8 720.6,432.5" fill="#e4de20"/>
<polygon points="751.5,371.3 791.2,380.7 781.9,466.7 742.8,455.8" fill="#ffff38"/>
<polygon points="756.8,398.6 765.5,400.8 761.0,443.4 752.4,441.0" fill="#e4de20"/>
<polygon points="771.8,402.4 780.5,404.5 775.9,447.4 767.3,445.0" fill="#e4de20"/>
<polygon points="798.8,382.5 838.5,392.0 828.5,479.6 789.3,468.7" fill="#17181a"/>
<polygon points="846.1,393.8 885.8,403.2 875.0,492.5 835.9,481.6" fill="#ffff38"/>
<polygon points="850.9,422.1 859.6,424.3 854.4,468.5 845.8,466.2" fill="#e4de20"/>
<polygon points="865.9,425.9 874.6,428.0 869.3,472.5 860.7,470.2" fill="#e4de20"/>
<polygon points="893.3,405.0 933.1,414.5 921.6,505.4 882.5,494.6" fill="#17181a"/>
<polygon points="940.6,416.3 980.3,425.7 968.1,518.3 929.0,507.5" fill="#ffff38"/>
<polygon points="945.1,445.6 953.7,447.8 947.8,493.7 939.2,491.3" fill="#e4de20"/>
<polygon points="960.1,449.4 968.8,451.5 962.7,497.7 954.1,495.4" fill="#e4de20"/>
<polygon points="987.9,427.5 1027.6,437.0 1014.7,531.2 975.6,520.4" fill="#17181a"/>
<polygon points="91.2,287.1 130.2,298.2 130.9,346.4 92.4,334.2" fill="#ffff38"/>
<polygon points="99.3,303.5 107.9,306.0 108.4,329.8 99.9,327.1" fill="#e4de20"/>
<polygon points="114.1,307.8 122.7,310.3 123.0,334.3 114.5,331.7" fill="#e4de20"/>
<polygon points="137.7,300.3 176.6,311.4 176.7,360.9 138.2,348.7" fill="#ffff38"/>
<polygon points="145.6,317.1 154.1,319.6 154.3,344.0 145.8,341.4" fill="#e4de20"/>
<polygon points="160.4,321.5 168.9,324.0 169.0,348.6 160.5,346.0" fill="#e4de20"/>
<polygon points="184.1,313.5 223.1,324.7 222.6,375.4 184.1,363.2" fill="#ffff38"/>
<polygon points="191.8,330.7 200.4,333.3 200.3,358.3 191.8,355.7" fill="#e4de20"/>
<polygon points="206.6,335.1 215.2,337.6 215.0,362.9 206.5,360.2" fill="#e4de20"/>
<polygon points="230.5,326.8 269.5,337.9 268.5,390.0 229.9,377.7" fill="#ffff38"/>
<polygon points="238.1,344.4 246.6,346.9 246.3,372.6 237.8,370.0" fill="#e4de20"/>
<polygon points="252.9,348.7 261.4,351.2 260.9,377.1 252.4,374.5" fill="#e4de20"/>
<polygon points="276.9,340.0 315.9,351.1 314.3,404.5 275.8,392.3" fill="#17181a"/>
<polygon points="323.3,353.3 362.3,364.4 360.2,419.0 321.7,406.8" fill="#ffff38"/>
<polygon points="330.6,371.6 339.1,374.1 338.2,401.1 329.7,398.5" fill="#e4de20"/>
<polygon points="345.4,376.0 353.9,378.5 352.9,405.7 344.4,403.1" fill="#e4de20"/>
<polygon points="369.7,366.5 408.7,377.6 406.0,433.5 367.5,421.3" fill="#ffff38"/>
<polygon points="376.8,385.2 385.4,387.8 384.2,415.4 375.7,412.8" fill="#e4de20"/>
<polygon points="391.6,389.6 400.1,392.1 398.8,420.0 390.4,417.3" fill="#e4de20"/>
<polygon points="416.2,379.8 455.1,390.9 451.9,448.1 413.4,435.9" fill="#ffff38"/>
<polygon points="423.1,398.9 431.6,401.4 430.1,429.7 421.6,427.0" fill="#e4de20"/>
<polygon points="437.9,403.2 446.4,405.7 444.8,434.2 436.3,431.6" fill="#e4de20"/>
<polygon points="462.6,393.0 501.6,404.1 497.7,462.6 459.2,450.4" fill="#ffff38"/>
<polygon points="469.3,412.5 477.9,415.0 476.1,443.9 467.6,441.3" fill="#e4de20"/>
<polygon points="484.1,416.9 492.6,419.4 490.8,448.5 482.3,445.9" fill="#e4de20"/>
<polygon points="509.0,406.2 548.0,417.4 543.6,477.1 505.1,464.9" fill="#17181a"/>
<polygon points="555.4,419.5 594.4,430.6 589.5,491.7 550.9,479.4" fill="#ffff38"/>
<polygon points="561.8,439.8 570.4,442.3 568.1,472.5 559.6,469.9" fill="#e4de20"/>
<polygon points="576.6,444.1 585.1,446.6 582.7,477.0 574.2,474.4" fill="#e4de20"/>
<polygon points="601.8,432.7 640.8,443.8 635.3,506.2 596.8,494.0" fill="#ffff38"/>
<polygon points="608.1,453.4 616.6,455.9 614.0,486.8 605.5,484.1" fill="#e4de20"/>
<polygon points="622.8,457.7 631.4,460.3 628.7,491.3 620.2,488.7" fill="#e4de20"/>
<polygon points="648.2,446.0 687.2,457.1 681.2,520.7 642.7,508.5" fill="#ffff38"/>
<polygon points="654.3,467.0 662.9,469.5 660.0,501.0 651.5,498.4" fill="#e4de20"/>
<polygon points="669.1,471.4 677.6,473.9 674.7,505.6 666.2,502.9" fill="#e4de20"/>
<polygon points="694.7,459.2 733.6,470.3 727.0,535.2 688.5,523.0" fill="#ffff38"/>
<polygon points="700.6,480.6 709.1,483.2 706.0,515.3 697.5,512.7" fill="#e4de20"/>
<polygon points="715.3,485.0 723.9,487.5 720.6,519.9 712.1,517.2" fill="#e4de20"/>
<polygon points="741.1,472.4 780.1,483.6 772.9,549.8 734.4,537.6" fill="#ffff38"/>
<polygon points="746.8,494.3 755.4,496.8 751.9,529.6 743.4,526.9" fill="#e4de20"/>
<polygon points="761.6,498.6 770.1,501.1 766.6,534.1 758.1,531.5" fill="#e4de20"/>
<polygon points="787.5,485.7 826.5,496.8 818.7,564.3 780.2,552.1" fill="#ffff38"/>
<polygon points="793.1,507.9 801.6,510.4 797.9,543.8 789.4,541.2" fill="#e4de20"/>
<polygon points="807.8,512.2 816.4,514.8 812.6,548.4 804.1,545.8" fill="#e4de20"/>
<polygon points="880.3,512.2 919.3,523.3 910.5,593.4 871.9,581.1" fill="#ffff38"/>
<polygon points="885.6,535.2 894.1,537.7 889.8,572.4 881.3,569.7" fill="#e4de20"/>
<polygon points="900.3,539.5 908.9,542.0 904.5,576.9 896.0,574.3" fill="#e4de20"/>
<polygon points="926.7,525.4 965.7,536.5 956.3,607.9 917.8,595.7" fill="#ffff38"/>
<polygon points="931.8,548.8 940.4,551.3 935.8,586.7 927.3,584.0" fill="#e4de20"/>
<polygon points="946.6,553.1 955.1,555.6 950.5,591.2 942.0,588.6" fill="#e4de20"/>
<polygon points="973.2,538.7 1012.1,549.8 1002.2,622.4 963.7,610.2" fill="#ffff38"/>
<polygon points="978.1,562.4 986.6,564.9 981.8,600.9 973.3,598.3" fill="#e4de20"/>
<polygon points="992.8,566.8 1001.4,569.3 996.4,605.5 988.0,602.8" fill="#e4de20"/>
<polygon points="92.6,344.2 131.0,356.6 131.6,398.7 93.6,385.3" fill="#ffff38"/>
<polygon points="100.6,359.1 109.0,361.9 109.4,382.6 101.0,379.7" fill="#e4de20"/>
<polygon points="115.1,363.9 123.5,366.7 123.9,387.6 115.5,384.7" fill="#e4de20"/>
<polygon points="138.3,359.0 176.8,371.4 176.9,414.6 138.8,401.2" fill="#ffff38"/>
<polygon points="146.2,374.2 154.6,377.0 154.7,398.3 146.4,395.4" fill="#e4de20"/>
<polygon points="160.7,379.0 169.1,381.8 169.2,403.3 160.8,400.4" fill="#e4de20"/>
<polygon points="184.1,373.8 222.5,386.2 222.1,430.5 184.1,417.1" fill="#ffff38"/>
<polygon points="191.7,389.3 200.2,392.1 200.1,414.0 191.7,411.1" fill="#e4de20"/>
<polygon points="206.3,394.2 214.7,397.0 214.6,419.0 206.2,416.1" fill="#e4de20"/>
<polygon points="229.8,388.6 268.2,401.0 267.4,446.4 229.3,433.0" fill="#17181a"/>
<polygon points="275.6,403.4 314.0,415.8 312.6,462.4 274.6,449.0" fill="#ffff38"/>
<polygon points="282.9,419.6 291.4,422.4 290.8,445.4 282.4,442.5" fill="#e4de20"/>
<polygon points="297.5,424.4 305.9,427.2 305.3,450.4 296.9,447.5" fill="#e4de20"/>
<polygon points="321.3,418.2 359.7,430.6 357.9,478.3 319.8,464.9" fill="#ffff38"/>
<polygon points="328.5,434.8 336.9,437.5 336.1,461.1 327.8,458.2" fill="#e4de20"/>
<polygon points="343.1,439.6 351.5,442.4 350.6,466.1 342.2,463.2" fill="#e4de20"/>
<polygon points="367.0,433.0 405.5,445.4 403.1,494.2 365.1,480.8" fill="#ffff38"/>
<polygon points="374.1,449.9 382.5,452.7 381.5,476.8 373.1,473.9" fill="#e4de20"/>
<polygon points="388.7,454.7 397.1,457.5 396.0,481.8 387.6,478.9" fill="#e4de20"/>
<polygon points="412.8,447.8 451.2,460.2 448.4,510.1 410.3,496.7" fill="#ffff38"/>
<polygon points="419.7,465.0 428.1,467.8 426.8,492.5 418.4,489.6" fill="#e4de20"/>
<polygon points="434.3,469.9 442.7,472.7 441.3,497.5 432.9,494.6" fill="#e4de20"/>
<polygon points="458.5,462.6 496.9,475.0 493.6,526.1 455.6,512.7" fill="#ffff38"/>
<polygon points="465.3,480.2 473.7,483.0 472.2,508.2 463.8,505.3" fill="#e4de20"/>
<polygon points="479.9,485.0 488.3,487.8 486.7,513.2 478.3,510.3" fill="#e4de20"/>
<polygon points="504.3,477.4 542.7,489.8 538.9,542.0 500.8,528.6" fill="#ffff38"/>
<polygon points="510.9,495.3 519.3,498.1 517.5,523.9 509.1,521.0" fill="#e4de20"/>
<polygon points="525.4,500.1 533.9,502.9 532.0,528.9 523.6,526.0" fill="#e4de20"/>
<polygon points="550.0,492.2 588.4,504.6 584.1,557.9 546.1,544.5" fill="#ffff38"/>
<polygon points="556.5,510.4 564.9,513.2 562.9,539.6 554.5,536.7" fill="#e4de20"/>
<polygon points="571.0,515.3 579.5,518.1 577.3,544.6 569.0,541.7" fill="#e4de20"/>
<polygon points="595.7,507.0 634.1,519.4 629.4,573.8 591.3,560.4" fill="#ffff38"/>
<polygon points="602.1,525.6 610.5,528.4 608.2,555.3 599.8,552.4" fill="#e4de20"/>
<polygon points="616.6,530.4 625.1,533.2 622.7,560.3 614.3,557.4" fill="#e4de20"/>
<polygon points="641.5,521.8 679.9,534.2 674.6,589.8 636.6,576.4" fill="#ffff38"/>
<polygon points="647.7,540.7 656.1,543.5 653.6,571.0 645.2,568.1" fill="#e4de20"/>
<polygon points="662.2,545.6 670.6,548.4 668.0,576.0 659.7,573.1" fill="#e4de20"/>
<polygon points="687.2,536.6 725.6,549.0 719.9,605.7 681.8,592.3" fill="#ffff38"/>
<polygon points="693.3,555.9 701.7,558.7 698.9,586.7 690.5,583.8" fill="#e4de20"/>
<polygon points="707.8,560.7 716.2,563.5 713.4,591.7 705.0,588.8" fill="#e4de20"/>
<polygon points="732.9,551.4 771.4,563.9 765.1,621.6 727.1,608.2" fill="#ffff38"/>
<polygon points="738.8,571.0 747.3,573.8 744.3,602.4 735.9,599.5" fill="#e4de20"/>
<polygon points="753.4,575.8 761.8,578.6 758.7,607.4 750.4,604.5" fill="#e4de20"/>
<polygon points="778.7,566.2 817.1,578.7 810.4,637.5 772.3,624.1" fill="#17181a"/>
<polygon points="870.2,595.8 908.6,608.3 900.9,669.4 862.8,656.0" fill="#ffff38"/>
<polygon points="875.6,616.4 884.0,619.2 880.3,649.5 871.9,646.6" fill="#e4de20"/>
<polygon points="890.2,621.3 898.6,624.1 894.8,654.5 886.4,651.6" fill="#e4de20"/>
<polygon points="915.9,610.6 954.3,623.1 946.1,685.3 908.1,671.9" fill="#ffff38"/>
<polygon points="921.2,631.6 929.6,634.4 925.7,665.2 917.3,662.3" fill="#e4de20"/>
<polygon points="935.8,636.4 944.2,639.2 940.1,670.2 931.7,667.3" fill="#e4de20"/>
<polygon points="961.6,625.4 1000.1,637.9 991.4,701.2 953.3,687.8" fill="#ffff38"/>
<polygon points="966.8,646.7 975.2,649.5 971.0,680.9 962.6,678.0" fill="#e4de20"/>
<polygon points="981.4,651.5 989.8,654.3 985.5,685.9 977.1,683.0" fill="#e4de20"/>
<polygon points="472.3,207.4 504.8,209.8 507.3,263.4 475.3,261.4" fill="#ffff38"/>
<polygon points="509.1,207.8 541.6,210.2 543.5,263.3 511.5,261.4" fill="#ffff38"/>
<polygon points="546.0,207.7 578.5,210.1 579.8,262.7 547.8,260.7" fill="#ffff38"/>
<polygon points="619.8,208.8 652.4,211.2 652.5,262.9 620.5,260.9" fill="#ffff38"/>
<polygon points="656.8,214.7 689.4,217.1 688.9,268.4 656.9,266.4" fill="#ffff38"/>
<polygon points="693.7,226.1 726.2,228.5 725.1,279.3 693.2,277.3" fill="#ffff38"/>
<polygon points="730.5,230.2 763.0,232.5 761.4,282.9 729.5,281.0" fill="#ffff38"/>
<polygon points="767.7,224.4 800.2,226.8 798.0,276.6 766.0,274.7" fill="#ffff38"/>
<polygon points="804.3,234.1 836.8,236.5 834.0,285.9 802.1,284.0" fill="#ffff38"/>
<polygon points="841.2,236.6 873.6,238.9 870.3,287.9 838.4,286.0" fill="#ffff38"/>
<polygon points="878.1,237.9 910.6,240.3 906.7,288.8 874.8,286.8" fill="#ffff38"/>
<polygon points="915.1,240.1 947.5,242.5 943.1,290.5 911.1,288.6" fill="#ffff38"/>
<polygon points="475.7,269.2 507.6,271.1 510.0,322.9 478.6,321.4" fill="#ffff38"/>
<polygon points="511.7,264.3 543.6,266.2 545.4,317.6 514.0,316.0" fill="#ffff38"/>
<polygon points="548.2,272.5 580.1,274.4 581.3,325.3 549.9,323.8" fill="#ffff38"/>
<polygon points="584.3,267.2 616.2,269.2 616.9,319.6 585.4,318.1" fill="#ffff38"/>
<polygon points="620.6,273.0 652.6,274.9 652.7,324.9 621.3,323.4" fill="#ffff38"/>
<polygon points="656.9,280.1 688.8,282.0 688.4,331.5 657.0,330.0" fill="#ffff38"/>
<polygon points="693.2,280.9 725.1,282.8 724.1,331.9 692.7,330.4" fill="#ffff38"/>
<polygon points="729.6,276.3 761.5,278.3 760.0,326.9 728.5,325.4" fill="#ffff38"/>
<polygon points="765.5,289.5 797.4,291.3 795.3,339.5 763.9,338.1" fill="#ffff38"/>
<polygon points="802.0,286.7 833.9,288.6 831.2,336.3 799.8,334.8" fill="#ffff38"/>
<polygon points="838.3,287.7 870.2,289.6 867.0,336.9 835.6,335.4" fill="#ffff38"/>
<polygon points="875.2,280.6 907.2,282.6 903.5,329.5 871.9,327.9" fill="#ffff38"/>
<polygon points="910.9,291.5 942.8,293.4 938.5,339.8 907.1,338.3" fill="#ffff38"/>
<polygon points="478.5,319.4 509.9,320.9 512.3,372.7 481.4,371.6" fill="#ffff38"/>
<polygon points="514.5,328.6 545.9,330.1 547.7,381.4 516.8,380.4" fill="#ffff38"/>
<polygon points="550.0,326.6 581.4,328.1 582.7,379.0 551.8,377.9" fill="#ffff38"/>
<polygon points="585.8,334.5 617.2,335.9 617.9,386.4 587.0,385.3" fill="#ffff38"/>
<polygon points="621.4,333.2 652.7,334.6 652.9,384.6 622.0,383.6" fill="#ffff38"/>
<polygon points="657.0,337.4 688.3,338.8 687.9,388.4 657.1,387.4" fill="#ffff38"/>
<polygon points="692.7,331.4 724.1,332.9 723.1,382.0 692.2,380.9" fill="#ffff38"/>
<polygon points="728.3,338.1 759.6,339.5 758.1,388.2 727.2,387.1" fill="#ffff38"/>
<polygon points="763.8,341.3 795.2,342.7 793.1,391.0 762.2,389.9" fill="#ffff38"/>
<polygon points="799.4,344.4 830.7,345.9 828.1,393.6 797.2,392.6" fill="#ffff38"/>
<polygon points="835.4,338.2 866.8,339.7 863.6,387.0 832.7,385.9" fill="#ffff38"/>
<polygon points="870.5,347.9 901.9,349.4 898.1,396.2 867.3,395.2" fill="#ffff38"/>
<polygon points="906.1,350.0 937.4,351.4 933.1,397.8 902.3,396.8" fill="#ffff38"/>
<polygon points="1105.9,494.1 1295.2,239.8 1272.0,398.0 1081.8,662.0" fill="#1b1d20"/>
<polygon points="1044.5,688.5 1086.2,630.9 1081.8,662.0 1040.0,720.0" fill="#1b1d20"/>
<polygon points="1083.6,419.7 1098.4,400.3 1081.3,519.5 1066.5,539.3" fill="#ffff38"/>
<polygon points="1100.0,398.2 1114.8,378.8 1097.8,497.3 1083.0,517.2" fill="#ffff38"/>
<polygon points="1116.4,376.7 1131.2,357.3 1114.3,475.2 1099.5,495.1" fill="#ffff38"/>
<polygon points="1132.9,355.2 1147.7,335.8 1130.8,453.1 1115.9,473.0" fill="#ffff38"/>
<polygon points="1149.3,333.6 1164.1,314.3 1147.3,431.0 1132.4,450.9" fill="#ffff38"/>
<polygon points="1165.8,312.1 1180.5,292.8 1163.8,408.9 1148.9,428.8" fill="#ffff38"/>
<polygon points="1182.2,290.6 1197.0,271.3 1180.3,386.8 1165.4,406.7" fill="#ffff38"/>
<polygon points="1198.6,269.1 1213.4,249.8 1196.7,364.7 1181.9,384.6" fill="#ffff38"/>
<polygon points="1215.1,247.6 1229.8,228.3 1213.2,342.6 1198.4,362.5" fill="#ffff38"/>
<polygon points="1231.5,226.1 1246.3,206.8 1229.7,320.5 1214.9,340.4" fill="#ffff38"/>
<polygon points="1247.9,204.6 1262.7,185.2 1246.2,298.4 1231.4,318.3" fill="#ffff38"/>
<polygon points="1264.4,183.1 1279.2,163.7 1262.7,276.3 1247.9,296.2" fill="#ffff38"/>
<polygon points="1280.8,161.6 1295.6,142.2 1279.2,254.2 1264.4,274.1" fill="#ffff38"/>
<polygon points="1297.2,140.1 1312.0,120.7 1295.7,232.1 1280.8,252.0" fill="#ffff38"/>
<polygon points="1065.3,551.1 1082.0,528.6 1073.9,585.2 1057.2,607.9" fill="#ffff38"/>
<polygon points="1085.0,524.7 1101.6,502.3 1093.6,558.5 1076.9,581.2" fill="#ffff38"/>
<polygon points="1104.6,498.3 1121.3,475.9 1113.2,531.8 1096.5,554.5" fill="#ffff38"/>
<polygon points="1124.2,471.9 1140.9,449.5 1132.9,505.1 1116.2,527.8" fill="#ffff38"/>
<polygon points="1054.7,625.5 1071.4,602.7 1062.7,663.4 1046.0,686.5" fill="#ffff38"/>
<polygon points="1074.4,598.7 1091.1,575.9 1082.4,636.2 1065.7,659.3" fill="#ffff38"/>
<polygon points="1094.0,571.9 1110.7,549.1 1102.1,609.0 1085.4,632.1" fill="#ffff38"/>
<polygon points="1113.7,545.1 1130.4,522.3 1121.8,581.8 1105.1,604.9" fill="#ffff38"/>
<polygon points="1120.0,360.0 1290.0,165.0 1300.0,200.0 1140.0,400.0" fill="#ffff38"/>
<polygon points="1164.2,437.8 1173.5,425.3 1148.4,598.7 1139.1,611.7" fill="#70747a"/>
<polygon points="1222.0,359.8 1231.3,347.3 1206.5,517.6 1197.2,530.6" fill="#70747a"/>
<polygon points="1126.5,506.2 1282.0,267.1 1279.4,284.7 1123.8,524.7" fill="#8a8e94"/>
<path d="M1103 455V420" stroke="#2222ff" stroke-width="3"/><path d="M1103 455L1135 462" stroke="#22cc22" stroke-width="3"/><path d="M1103 455L1085 470" stroke="#cc2222" stroke-width="3"/>
<ellipse cx="215" cy="448" rx="30" ry="14" fill="#6c6c6c" transform="rotate(-20 215 448)"/>
<ellipse cx="1250" cy="412" rx="22" ry="12" fill="#6c6c6c" transform="rotate(-40 1250 412)"/>
</svg>
<!-- NAV CUBE -->
<svg class="abs" style="left:1660px;top:70px" width="100" height="95" viewBox="1660 70 100 95">
 <polygon points="1671,84.400 1708.500,79 1749.800,83.900 1713.700,91" fill="#fff" stroke="#2a2a2a" stroke-width="0.700"/>
 <polygon points="1671,84.400 1713.700,91 1713.700,155.700 1675.600,133.300" fill="#fff" stroke="#2a2a2a" stroke-width="0.700"/>
 <polygon points="1713.700,91 1749.800,83.900 1745.500,131.800 1713.700,155.700" fill="#fff" stroke="#2a2a2a" stroke-width="0.700"/>
 <polygon points="1677.300,87.300 1704.800,92 1704.800,101 1677.300,94.800" fill="#c8c8c8"/>
 <text transform="matrix(0.56 0.3 0 1.15 1679.500 117)" font-family="Liberation Sans, sans-serif" font-size="12" fill="#8e8e8e">Справа</text>
 <text transform="matrix(0.5 -0.24 -0.1 1.1 1723.500 127)" font-family="Liberation Sans, sans-serif" font-size="14" fill="#8e8e8e">Сзади</text>
</svg>
<!-- BOTTOM PANEL -->
<div class="abs" id="bpanel">
  <div class="abs" style="left:0;top:43px;width:1286px;height:32px;background:#666"></div>
  <div class="abs" style="left:0;top:75px;width:1286px;height:358px;background:#fff"></div>
  <div class="abs" style="left:0;top:111px;width:1286px;height:1px;background:#dcdcdc"></div>
  <svg class="abs" style="left:1236px;top:18px" width="16" height="12" viewBox="0 0 16 12" fill="#e6e6e6"><rect x="1" y="1" width="4.200" height="10.500"/><rect x="5.900" y="1" width="4.200" height="10.500"/><rect x="10.800" y="1" width="4.200" height="10.500"/></svg>
  <svg class="abs" style="left:1267px;top:19px" width="14" height="10" viewBox="0 0 14 10" fill="none" stroke="#e6e6e6" stroke-width="1.700"><path d="M2 2.300l5 5 5-5"/></svg>
  <div class="t" id="tx_b1" style="left:1027.500px;top:53px;font-size:12px;font-weight:bold;color:#e6e6e6">Раздел</div>
  <div class="t" id="tx_b2" style="left:1180.500px;top:53px;font-size:12px;font-weight:bold;color:#e6e6e6">Элемент (Модель .</div>
  <div class="t" id="tx_b3" style="left:1082px;top:85px;font-size:14px;color:#444">Отсутствуют данные</div>
  <!-- v scrollbar -->
  <div class="abs" style="left:1286px;top:43px;width:10px;height:400px;background:#666"></div>
  <div class="abs" style="left:1288px;top:47px;width:0;height:0;border-style:solid;border-width:0 3px 4px 3px;border-color:transparent transparent #3a93b0 transparent"></div>
  <div class="abs" style="left:1288px;top:55px;width:6px;height:357px;background:#3a93b0;border-radius:3px"></div>
  <div class="abs" style="left:1288px;top:425px;width:0;height:0;border-style:solid;border-width:4px 3px 0 3px;border-color:#3a93b0 transparent transparent transparent"></div>
  <!-- h scrollbar -->
  <div class="abs" style="left:0;top:433px;width:1296px;height:10px;background:#666"></div>
  <div class="abs" style="left:3px;top:435px;width:0;height:0;border-style:solid;border-width:3px 4px 3px 0;border-color:transparent #3a93b0 transparent transparent"></div>
  <div class="abs" style="left:12px;top:435px;width:705px;height:6px;background:#3a93b0;border-radius:3px"></div>
  <div class="abs" style="left:1280px;top:435px;width:0;height:0;border-style:solid;border-width:3px 0 3px 4px;border-color:transparent transparent transparent #3a93b0"></div>
  <div class="abs" style="left:0;top:443px;width:1296px;height:3px;background:#272727"></div>
</div>
<!-- RIGHT TOOLBAR -->
<div class="abs" id="rtb"></div>
<div class="abs" style="left:1786px;top:107px;width:37px;height:1.3px;background:#303030"></div>
<div class="abs" style="left:1786px;top:200px;width:37px;height:1.3px;background:#303030"></div>
<div class="abs" style="left:1786px;top:512px;width:37px;height:1.3px;background:#303030"></div>
<div class="abs" style="left:1786px;top:562px;width:37px;height:1.3px;background:#303030"></div>
<div class="abs" style="left:1786px;top:743px;width:37px;height:1.3px;background:#303030"></div>
<div class="abs" style="left:1822px;top:67px;width:1px;height:756px;background:#3a3a3a"></div>
<div class="abs" style="left:1788px;top:752px;width:32px;height:32px;background:#8c8c8c"></div>
<div class="abs" style="left:1788px;top:796px;width:32px;height:27px;background:#8c8c8c"></div>
<svg class="abs" style="left:1786px;top:60px" width="37" height="763" viewBox="1786 60 37 763" fill="none" stroke="#e2e2e2" stroke-width="1.3">
<path d="M1794.9 83.9V77.9H1800.9M1807.1 77.9H1813.1V83.9M1813.1 90.1V96.1H1807.1M1800.9 96.1H1794.9V90.1" stroke-width="1.3"/><path d="M1804.0 81.9L1808.6 84.5V89.5L1804.0 92.1L1799.4 89.5V84.5z" fill="#e2e2e2" stroke="none"/>
<path d="M1800.800 137.200h-3.600a4.800 4.800 0 0 1-.6-9.500a6.300 6.300 0 0 1 7.800-5.600a6.300 6.300 0 0 1 7.600 5.600a4.800 4.800 0 0 1-.6 9.500h-3.400" stroke-width="1.400"/><path d="M1804.400 126.200v17.600M1804.400 134.600l-5.300-3.900M1804.400 137l4.200-3.200" stroke-width="1.400"/>
<path d="M1814.600 170.700V163.300H1791.100V180.600H1799.300V183.400H1796.200" stroke-width="1.300"/><path d="M1800.9 177.5V172.5H1805.9M1811.7 172.5H1816.7V177.5M1816.7 183.3V188.3H1811.7M1805.9 188.3H1800.9V183.3" stroke-width="1.3"/><path d="M1809.0 176.0L1813.1 178.4V183.2L1809.0 185.6L1804.9 183.2V178.4z" fill="#e2e2e2" stroke="none"/>
<rect x="1794.600" y="221.600" width="19" height="6" stroke-width="1.200"/><path d="M1794 229.700h20.200" stroke-width="1"/><path d="M1797.800 227.600v-2.600M1801 227.600v-2.600M1804.200 227.600v-2.600M1807.400 227.600v-2.600M1810.600 227.600v-2.600" stroke-width="1.200"/><path d="M1789.900 235v4.200h4.200z" fill="#e2e2e2" stroke="none"/>
<path d="M1799.300 263.100L1808.800 255.200V274.800L1799.300 283z" fill="#e2e2e2" stroke="none"/><path d="M1791.500 271.200L1799.700 265.600H1816.600L1808.500 271.200z" stroke-width="1.200"/>
<path d="M1792.400 307.300H1808.800V323.600H1792.400zM1799.300 302.200H1815.800V318.500H1799.300zM1792.400 307.300L1799.300 302.200M1808.800 307.300L1815.800 302.200M1792.400 323.600L1799.300 318.500M1808.800 323.600L1815.800 318.500" stroke-width="1.100"/><path d="M1801.900 305.200L1806 302.600V320.600L1801.900 323.200z" fill="#e2e2e2" stroke="none"/>
<path d="M1793.600 346.500H1815.600V365.400H1790.600V349.500z" stroke-width="1.300"/><path d="M1793.600 346.500v3h-3" stroke-width="1"/><path d="M1816.700 348.500V366.800H1792.500" stroke-width="2.200"/><path d="M1802.400 347v18M1791 355.500h24" stroke-width="1" stroke-dasharray="2.200 1.200"/><rect x="1809" y="362.600" width="6" height="2.400" stroke-width="1"/>
<circle cx="1803.900" cy="400.900" r="7.300" stroke-width="2.100"/><circle cx="1803.900" cy="400.900" r="4.100" fill="#e2e2e2" stroke="none"/><path d="M1803.900 389.800v3.500M1803.900 408.500v3.500M1792.800 400.900h3.500M1811.500 400.900h3.500" stroke-width="2"/>
<circle cx="1803.900" cy="444.800" r="12.700" stroke-width="1"/><path d="M1798.300 452V438.400c2.500-.9 4.500-.7 6.700.6s4.300 1.600 6.800 1.200v7.100c-2.500.4-4.600.1-6.800-1.200s-4.200-1.500-6.700-.6" stroke-width="1.100"/>
<text x="1792.300" y="487" font-family="Liberation Sans, sans-serif" font-weight="bold" font-size="13.500" fill="#e2e2e2" stroke="none">S</text><path d="M1805.400 478.500H1814.400M1793.700 490.200V499.100" stroke-width="0.800"/><path d="M1814.400 478.500V499.100H1793.700M1793.700 490.200H1805.400V478.500" stroke-width="1.100" stroke-dasharray="1.100 1.100"/><rect x="1803.9" y="477.0" width="3" height="3" fill="#e2e2e2" stroke="none"/><rect x="1812.9" y="477.0" width="3" height="3" fill="#e2e2e2" stroke="none"/><rect x="1792.2" y="488.7" width="3" height="3" fill="#e2e2e2" stroke="none"/><rect x="1803.9" y="488.7" width="3" height="3" fill="#e2e2e2" stroke="none"/><rect x="1792.2" y="497.6" width="3" height="3" fill="#e2e2e2" stroke="none"/><rect x="1812.9" y="497.6" width="3" height="3" fill="#e2e2e2" stroke="none"/>
<path d="M1790.900 541.500L1817.900 526.200M1790.900 550.400L1817.900 535.300M1799.300 531L1817.200 540.600M1791.600 536.600L1809 546.400" stroke-width="1"/><text x="1790.500" y="535.500" font-family="Liberation Sans, sans-serif" font-size="6" fill="#e2e2e2" stroke="none">1</text><text x="1800" y="529.500" font-family="Liberation Sans, sans-serif" font-size="6" fill="#e2e2e2" stroke="none">2</text>
<rect x="1792.7" y="575.3" width="22.6" height="23.4" stroke-width="1.2" stroke-dasharray="1.7 1.5"/><path d="M1804 580.200L1809.700 583.500V590.500L1804 593.800L1798.300 590.500V583.500zM1798.300 583.500L1804 586.800L1809.700 583.500M1804 586.800V593.800" stroke="#cfcfcf" stroke-width="1.100"/>
<rect x="1792.7" y="619.3" width="22.6" height="23.4" stroke-width="1.2" stroke-dasharray="1.7 1.5"/><g transform="translate(1796 622.900) scale(0.68)"><path d="M12 9a3 3 0 0 0-3 3 3 3 0 0 0 3 3 3 3 0 0 0 3-3 3 3 0 0 0-3-3m0 8a5 5 0 0 1-5-5 5 5 0 0 1 5-5 5 5 0 0 1 5 5 5 5 0 0 1-5 5m0-12.500C7 4.500 2.730 7.610 1 12c1.730 4.390 6 7.500 11 7.500s9.270-3.110 11-7.500c-1.730-4.390-6-7.500-11-7.500z" fill="#e2e2e2" stroke="none"/></g>
<rect x="1792.7" y="663.3" width="22.6" height="23.4" stroke-width="1.2" stroke-dasharray="1.7 1.5"/><g transform="translate(1795.800 666.800) scale(0.68)"><path d="M11.830 9L15 12.160V12a3 3 0 0 0-3-3h-.17m-4.300.8l1.550 1.550c-.05.210-.08.420-.08.650a3 3 0 0 0 3 3c.22 0 .44-.03.650-.08l1.550 1.550c-.67.330-1.410.53-2.200.53a5 5 0 0 1-5-5c0-.79.200-1.530.53-2.200M2 4.270l2.280 2.280.45.450C3.080 8.300 1.780 10 1 12c1.730 4.390 6 7.500 11 7.500 1.550 0 3.030-.3 4.380-.84l.43.420L19.730 22 21 20.730 3.270 3M12 7a5 5 0 0 1 5 5c0 .64-.13 1.260-.36 1.820l2.930 2.930c1.500-1.250 2.700-2.890 3.430-4.750-1.730-4.390-6-7.500-11-7.500-1.400 0-2.740.25-4 .7l2.170 2.150C10.740 7.130 11.350 7 12 7z" fill="#e2e2e2" stroke="none"/></g>
<rect x="1792.7" y="707.3" width="22.6" height="23.4" stroke-width="1.2" stroke-dasharray="1.7 1.5"/><rect x="1802" y="717" width="16" height="16" fill="#e2e2e2" stroke="none"/><path d="M1805.500 720.500l9 9M1814.500 720.500l-9 9" stroke="#444" stroke-width="1.100"/>
<path d="M1794 760.200L1803.600 763.500V779L1795 771.600z" fill="#e4e4e4" stroke="#e4e4e4" stroke-width="0.800" stroke-linejoin="round"/><path d="M1794 760.200L1804 757.900L1813.800 760.200L1803.600 763.500z" fill="#777" stroke="#d8d8d8" stroke-width="0.800"/><path d="M1813.800 760.200L1813 771.600L1803.600 779" stroke="#d8d8d8" stroke-width="1"/>
<ellipse cx="1804.200" cy="812" rx="11.500" ry="4.600" stroke-width="1.700"/><ellipse cx="1804.200" cy="812.500" rx="4.600" ry="11" stroke-width="1.700"/><path d="M1804.200 809v3.500l-3.200 2.800M1804.200 812.500l3.200 2.800" stroke-width="0.700"/>
</svg>
<!-- DIALOG 1 -->
<div class="abs" id="dlg1">
  <div class="abs" id="dlg1h"></div>
  <div class="t" id="tx_d1title" style="left:8px;top:9px;font-size:16px;color:#fff;-webkit-text-stroke:0.35px #fff">Настройка правила "Проверка по формуле"</div>
  <svg class="abs" style="left:461px;top:6px" width="18" height="21" viewBox="0 0 18 21" fill="#e6e6e6"><path d="M5.400 1.200L1.400 5.600h3V12h2V5.600h3zM11.500 19.800l4-4.400h-3V8.900h-2v6.500h-3z"/></svg>
  <svg class="abs" style="left:484px;top:4px" width="24" height="24" viewBox="0 0 24 24" fill="#e6e6e6"><g transform="translate(12 12) scale(0.98) translate(-12 -12)"><path d="M12 8a4 4 0 0 1 4 4 4 4 0 0 1-4 4 4 4 0 0 1-4-4 4 4 0 0 1 4-4m0 2a2 2 0 0 0-2 2 2 2 0 0 0 2 2 2 2 0 0 0 2-2 2 2 0 0 0-2-2m-2 12c-.25 0-.46-.18-.5-.42l-.37-2.650c-.63-.25-1.170-.59-1.690-.99l-2.490 1.010c-.22.080-.49 0-.61-.22l-2-3.460c-.130-.22-.070-.49.120-.64l2.110-1.660L4.500 12l.070-1-2.110-1.630c-.190-.150-.25-.42-.120-.64l2-3.460c.120-.22.390-.31.610-.22l2.490 1c.52-.39 1.060-.73 1.690-.98l.37-2.650c.04-.24.25-.42.500-.42h4c.25 0 .46.180.5.420l.37 2.650c.63.250 1.170.59 1.690.98l2.490-1c.22-.09.490 0 .61.220l2 3.460c.130.220.070.490-.12.640L19.430 11l.07 1-.07 1 2.110 1.630c.190.150.25.420.12.640l-2 3.460c-.12.220-.39.310-.61.220l-2.490-1c-.52.390-1.060.730-1.690.98l-.37 2.650c-.04.240-.25.420-.5.420h-4m1.250-18l-.37 2.610c-1.200.25-2.260.89-3.030 1.780L5.440 7.350l-.75 1.300L6.800 10.200a5.550 5.550 0 0 0 0 3.600l-2.120 1.560.75 1.300 2.430-1.040c.77.880 1.820 1.520 3.010 1.760l.37 2.620h1.520l.37-2.610c1.190-.25 2.240-.89 3.010-1.770l2.430 1.040.75-1.300-2.120-1.550c.4-1.170.4-2.440 0-3.610l2.110-1.550-.75-1.300-2.410 1.040a5.420 5.420 0 0 0-3.030-1.770L12.750 4h-1.500z"/></g></svg>
  <div class="abs" style="left:519px;top:14.600px;width:12px;height:2px;background:#e6e6e6"></div>
  <svg class="abs" style="left:538px;top:9px" width="16" height="16" viewBox="0 0 16 16" stroke="#e6e6e6" stroke-width="1.700" fill="none"><path d="M1.800 1.600l12 12M13.800 1.600l-12 12"/></svg>
  <div class="t" id="tx_d1l1" style="left:8px;top:46px;font-size:12px;color:#333">Элементы для контроля</div>
  <div class="fld" style="left:8px;top:60px;width:480px;height:32px"></div>
  <div class="t" id="tx_d1v1" style="left:16px;top:68px;font-size:14px;color:#666">Windows</div>
  <svg class="abs" style="left:494px;top:64px" width="24" height="24" viewBox="0 0 24 24" fill="#3a93b0"><path d="M12 9a3 3 0 0 0-3 3 3 3 0 0 0 3 3 3 3 0 0 0 3-3 3 3 0 0 0-3-3m0 8a5 5 0 0 1-5-5 5 5 0 0 1 5-5 5 5 0 0 1 5 5 5 5 0 0 1-5 5m0-12.500C7 4.500 2.730 7.610 1 12c1.730 4.390 6 7.500 11 7.500s9.270-3.110 11-7.500c-1.730-4.390-6-7.500-11-7.500z"/></svg>
  <svg class="abs" style="left:526px;top:64px" width="24" height="24" viewBox="0 0 24 24" fill="#111"><circle cx="12" cy="6" r="2.100"/><circle cx="12" cy="12" r="2.100"/><circle cx="12" cy="18" r="2.100"/></svg>
  <div class="t" id="tx_d1l2" style="left:8px;top:106px;font-size:12px;color:#333">Параметры элемента для контроля</div>
  <div class="fld" style="left:8px;top:124px;width:544px;height:31px;background:#efefef;border-radius:0"></div>
  <div class="t" id="tx_d1v2" style="left:12.500px;top:132px;font-size:14px;color:#555">Задать условие отбора по формуле</div>
</div>
<!-- DIALOG 2 -->
<div class="abs" id="dlg2">
  <div class="abs" id="dlg2h"></div>
  <div class="t" id="tx_d2title" style="left:8.500px;top:8px;font-size:16px;color:#fff">Просмотр элементов (265)</div>
  <div class="abs" style="left:331px;top:15.500px;width:11px;height:1.600px;background:#e6e6e6"></div>
  <div class="abs" id="dlg2c"></div>
  <div class="t ch" id="tx_c1" style="left:0.500px;top:36px">Наименование</div>
  <div class="t ch" id="tx_c2" style="left:118px;top:36px">Модель</div>
  <div class="t ch" id="tx_c3" style="left:177px;top:36px">Класс</div>
  <div class="t ch" id="tx_c4" style="left:236.500px;top:36px">GUID</div>
  <div class="abs" style="left:115px;top:53px;width:1px;height:420px;background:#8a8a8a"></div>
  <div class="abs" style="left:173px;top:53px;width:1px;height:420px;background:#8a8a8a"></div>
  <div class="abs" style="left:231px;top:53px;width:1px;height:420px;background:#8a8a8a"></div>
  <div class="abs" style="left:344px;top:53px;width:7px;height:420px;background:#6e6e6e"></div>
  <div class="abs" style="left:344px;top:53px;width:6px;height:32px;background:#3a93b0"></div>
  <div class="t rc nD" style="left:4.500px;top:56.5px">Окно_Двупольно…</div><div class="t rc" style="left:120.500px;top:56.5px">АР</div><div class="t rc cI" style="left:178.500px;top:56.5px">IfcWind…</div><svg class="abs" style="left:237px;top:55.0px" width="14" height="15" viewBox="0 0 14 15" fill="none" stroke="#444" stroke-width="1.100"><rect x="4" y="3.800" width="8.300" height="10" rx="1"/><path d="M1.300 10.500V2.200q0-1 1-1h7.200"/></svg><div class="t rc ga" style="left:256px;top:56.5px">3zwxpHJojFzx..</div>
  <div class="t rc nD" style="left:4.500px;top:76.5px">Окно_Двупольно…</div><div class="t rc" style="left:120.500px;top:76.5px">АР</div><div class="t rc cI" style="left:178.500px;top:76.5px">IfcWind…</div><svg class="abs" style="left:237px;top:75.0px" width="14" height="15" viewBox="0 0 14 15" fill="none" stroke="#444" stroke-width="1.100"><rect x="4" y="3.800" width="8.300" height="10" rx="1"/><path d="M1.300 10.500V2.200q0-1 1-1h7.200"/></svg><div class="t rc ga" style="left:256px;top:76.5px">3zwxpHJojFzx..</div>
  <div class="t rc nD" style="left:4.500px;top:96.5px">Окно_Двупольно…</div><div class="t rc" style="left:120.500px;top:96.5px">АР</div><div class="t rc cI" style="left:178.500px;top:96.5px">IfcWind…</div><svg class="abs" style="left:237px;top:95.0px" width="14" height="15" viewBox="0 0 14 15" fill="none" stroke="#444" stroke-width="1.100"><rect x="4" y="3.800" width="8.300" height="10" rx="1"/><path d="M1.300 10.500V2.200q0-1 1-1h7.200"/></svg><div class="t rc gb" style="left:256px;top:96.5px">3qkfs3CmH3I…</div>
  <div class="t rc nD" style="left:4.500px;top:116.5px">Окно_Двупольно…</div><div class="t rc" style="left:120.500px;top:116.5px">АР</div><div class="t rc cI" style="left:178.500px;top:116.5px">IfcWind…</div><svg class="abs" style="left:237px;top:115.0px" width="14" height="15" viewBox="0 0 14 15" fill="none" stroke="#444" stroke-width="1.100"><rect x="4" y="3.800" width="8.300" height="10" rx="1"/><path d="M1.300 10.500V2.200q0-1 1-1h7.200"/></svg><div class="t rc gc" style="left:256px;top:116.5px">1ZGZxpKFb2K…</div>
  <div class="t rc nO" style="left:4.500px;top:136.5px">Окно_Однополь…</div><div class="t rc" style="left:120.500px;top:136.5px">АР</div><div class="t rc cI" style="left:178.500px;top:136.5px">IfcWind…</div><svg class="abs" style="left:237px;top:135.0px" width="14" height="15" viewBox="0 0 14 15" fill="none" stroke="#444" stroke-width="1.100"><rect x="4" y="3.800" width="8.300" height="10" rx="1"/><path d="M1.300 10.500V2.200q0-1 1-1h7.200"/></svg><div class="t rc gd" style="left:256px;top:136.5px">12C$FDO6fCi…</div>
  <div class="t rc nD" style="left:4.500px;top:156.5px">Окно_Двупольно…</div><div class="t rc" style="left:120.500px;top:156.5px">АР</div><div class="t rc cI" style="left:178.500px;top:156.5px">IfcWind…</div><svg class="abs" style="left:237px;top:155.0px" width="14" height="15" viewBox="0 0 14 15" fill="none" stroke="#444" stroke-width="1.100"><rect x="4" y="3.800" width="8.300" height="10" rx="1"/><path d="M1.300 10.500V2.200q0-1 1-1h7.200"/></svg><div class="t rc ga" style="left:256px;top:156.5px">3zwxpHJojFzx..</div>
  <div class="t rc nD" style="left:4.500px;top:176.5px">Окно_Двупольно…</div><div class="t rc" style="left:120.500px;top:176.5px">АР</div><div class="t rc cI" style="left:178.500px;top:176.5px">IfcWind…</div><svg class="abs" style="left:237px;top:175.0px" width="14" height="15" viewBox="0 0 14 15" fill="none" stroke="#444" stroke-width="1.100"><rect x="4" y="3.800" width="8.300" height="10" rx="1"/><path d="M1.300 10.500V2.200q0-1 1-1h7.200"/></svg><div class="t rc ga" style="left:256px;top:176.5px">3zwxpHJojFzx..</div>
  <div class="t rc nO" style="left:4.500px;top:196.5px">Окно_Однополь…</div><div class="t rc" style="left:120.500px;top:196.5px">АР</div><div class="t rc cI" style="left:178.500px;top:196.5px">IfcWind…</div><svg class="abs" style="left:237px;top:195.0px" width="14" height="15" viewBox="0 0 14 15" fill="none" stroke="#444" stroke-width="1.100"><rect x="4" y="3.800" width="8.300" height="10" rx="1"/><path d="M1.300 10.500V2.200q0-1 1-1h7.200"/></svg><div class="t rc ga" style="left:256px;top:196.5px">3zwxpHJojFzx..</div>
  <div class="t rc nO" style="left:4.500px;top:216.5px">Окно_Однополь…</div><div class="t rc" style="left:120.500px;top:216.5px">АР</div><div class="t rc cI" style="left:178.500px;top:216.5px">IfcWind…</div><svg class="abs" style="left:237px;top:215.0px" width="14" height="15" viewBox="0 0 14 15" fill="none" stroke="#444" stroke-width="1.100"><rect x="4" y="3.800" width="8.300" height="10" rx="1"/><path d="M1.300 10.500V2.200q0-1 1-1h7.200"/></svg><div class="t rc ga" style="left:256px;top:216.5px">3zwxpHJojFzx..</div>
  <div class="t rc nO" style="left:4.500px;top:236.5px">Окно_Однополь…</div><div class="t rc" style="left:120.500px;top:236.5px">АР</div><div class="t rc cI" style="left:178.500px;top:236.5px">IfcWind…</div><svg class="abs" style="left:237px;top:235.0px" width="14" height="15" viewBox="0 0 14 15" fill="none" stroke="#444" stroke-width="1.100"><rect x="4" y="3.800" width="8.300" height="10" rx="1"/><path d="M1.300 10.500V2.200q0-1 1-1h7.200"/></svg><div class="t rc gb" style="left:256px;top:236.5px">3qkfs3CmH3I…</div>
  <div class="t rc nD" style="left:4.500px;top:256.5px">Окно_Двупольно…</div><div class="t rc" style="left:120.500px;top:256.5px">АР</div><div class="t rc cI" style="left:178.500px;top:256.5px">IfcWind…</div><svg class="abs" style="left:237px;top:255.0px" width="14" height="15" viewBox="0 0 14 15" fill="none" stroke="#444" stroke-width="1.100"><rect x="4" y="3.800" width="8.300" height="10" rx="1"/><path d="M1.300 10.500V2.200q0-1 1-1h7.200"/></svg><div class="t rc gb" style="left:256px;top:256.5px">3qkfs3CmH3I…</div>
  <div class="t rc nO" style="left:4.500px;top:276.5px">Окно_Однополь…</div><div class="t rc" style="left:120.500px;top:276.5px">АР</div><div class="t rc cI" style="left:178.500px;top:276.5px">IfcWind…</div><svg class="abs" style="left:237px;top:275.0px" width="14" height="15" viewBox="0 0 14 15" fill="none" stroke="#444" stroke-width="1.100"><rect x="4" y="3.800" width="8.300" height="10" rx="1"/><path d="M1.300 10.500V2.200q0-1 1-1h7.200"/></svg><div class="t rc ga" style="left:256px;top:276.5px">3zwxpHJojFzx..</div>
  <div class="t rc nD" style="left:4.500px;top:296.5px">Окно_Двупольно…</div><div class="t rc" style="left:120.500px;top:296.5px">АР</div><div class="t rc cI" style="left:178.500px;top:296.5px">IfcWind…</div><svg class="abs" style="left:237px;top:295.0px" width="14" height="15" viewBox="0 0 14 15" fill="none" stroke="#444" stroke-width="1.100"><rect x="4" y="3.800" width="8.300" height="10" rx="1"/><path d="M1.300 10.500V2.200q0-1 1-1h7.200"/></svg><div class="t rc ga" style="left:256px;top:296.5px">3zwxpHJojFzx..</div>
  <div class="t rc nD" style="left:4.500px;top:316.5px">Окно_Двупольно…</div><div class="t rc" style="left:120.500px;top:316.5px">АР</div><div class="t rc cI" style="left:178.500px;top:316.5px">IfcWind…</div><svg class="abs" style="left:237px;top:315.0px" width="14" height="15" viewBox="0 0 14 15" fill="none" stroke="#444" stroke-width="1.100"><rect x="4" y="3.800" width="8.300" height="10" rx="1"/><path d="M1.300 10.500V2.200q0-1 1-1h7.200"/></svg><div class="t rc gb" style="left:256px;top:316.5px">3qkfs3CmH3I…</div>
  <div class="t rc nD" style="left:4.500px;top:336.5px">Окно_Двупольно…</div><div class="t rc" style="left:120.500px;top:336.5px">АР</div><div class="t rc cI" style="left:178.500px;top:336.5px">IfcWind…</div><svg class="abs" style="left:237px;top:335.0px" width="14" height="15" viewBox="0 0 14 15" fill="none" stroke="#444" stroke-width="1.100"><rect x="4" y="3.800" width="8.300" height="10" rx="1"/><path d="M1.300 10.500V2.200q0-1 1-1h7.200"/></svg><div class="t rc ga" style="left:256px;top:336.5px">3zwxpHJojFzx..</div>
  <div class="t rc nO" style="left:4.500px;top:356.5px">Окно_Однополь…</div><div class="t rc" style="left:120.500px;top:356.5px">АР</div><div class="t rc cI" style="left:178.500px;top:356.5px">IfcWind…</div><svg class="abs" style="left:237px;top:355.0px" width="14" height="15" viewBox="0 0 14 15" fill="none" stroke="#444" stroke-width="1.100"><rect x="4" y="3.800" width="8.300" height="10" rx="1"/><path d="M1.300 10.500V2.200q0-1 1-1h7.200"/></svg><div class="t rc ge" style="left:256px;top:356.5px">1ZJbOT9uD0f…</div>
  <div class="t rc nD" style="left:4.500px;top:376.5px">Окно_Двупольно…</div><div class="t rc" style="left:120.500px;top:376.5px">АР</div><div class="t rc cI" style="left:178.500px;top:376.5px">IfcWind…</div><svg class="abs" style="left:237px;top:375.0px" width="14" height="15" viewBox="0 0 14 15" fill="none" stroke="#444" stroke-width="1.100"><rect x="4" y="3.800" width="8.300" height="10" rx="1"/><path d="M1.300 10.500V2.200q0-1 1-1h7.200"/></svg><div class="t rc ge" style="left:256px;top:376.5px">1ZJbOT9uD0f…</div>
  <div class="t rc nD" style="left:4.500px;top:396.5px">Окно_Двупольно…</div><div class="t rc" style="left:120.500px;top:396.5px">АР</div><div class="t rc cI" style="left:178.500px;top:396.5px">IfcWind…</div><svg class="abs" style="left:237px;top:395.0px" width="14" height="15" viewBox="0 0 14 15" fill="none" stroke="#444" stroke-width="1.100"><rect x="4" y="3.800" width="8.300" height="10" rx="1"/><path d="M1.300 10.500V2.200q0-1 1-1h7.200"/></svg><div class="t rc ge" style="left:256px;top:396.5px">1ZJbOT9uD0f…</div>
  <div class="t rc nD" style="left:4.500px;top:416.5px">Окно_Двупольно…</div><div class="t rc" style="left:120.500px;top:416.5px">АР</div><div class="t rc cI" style="left:178.500px;top:416.5px">IfcWind…</div><svg class="abs" style="left:237px;top:415.0px" width="14" height="15" viewBox="0 0 14 15" fill="none" stroke="#444" stroke-width="1.100"><rect x="4" y="3.800" width="8.300" height="10" rx="1"/><path d="M1.300 10.500V2.200q0-1 1-1h7.200"/></svg><div class="t rc ga" style="left:256px;top:416.5px">3zwxpHJojFzx..</div>
  <div class="t rc nD" style="left:4.500px;top:436.5px">Окно_Двупольно…</div><div class="t rc" style="left:120.500px;top:436.5px">АР</div><div class="t rc cI" style="left:178.500px;top:436.5px">IfcWind…</div><svg class="abs" style="left:237px;top:435.0px" width="14" height="15" viewBox="0 0 14 15" fill="none" stroke="#444" stroke-width="1.100"><rect x="4" y="3.800" width="8.300" height="10" rx="1"/><path d="M1.300 10.500V2.200q0-1 1-1h7.200"/></svg><div class="t rc ge" style="left:256px;top:436.5px">1ZJbOT9uD0f…</div>
  <div class="t rc nO" style="left:4.500px;top:456.5px">Окно_Однополь…</div><div class="t rc" style="left:120.500px;top:456.5px">АР</div><div class="t rc cI" style="left:178.500px;top:456.5px">IfcWind…</div><svg class="abs" style="left:237px;top:455.0px" width="14" height="15" viewBox="0 0 14 15" fill="none" stroke="#444" stroke-width="1.100"><rect x="4" y="3.800" width="8.300" height="10" rx="1"/><path d="M1.300 10.500V2.200q0-1 1-1h7.200"/></svg><div class="t rc ge" style="left:256px;top:456.5px">1ZJbOT9uD0f…</div>
</div>
<!-- ARROWS -->
<svg class="abs" style="left:960px;top:160px" width="150" height="150" viewBox="960 160 150 150">
 <defs><filter id="ash" x="-20%" y="-20%" width="140%" height="140%"><feGaussianBlur stdDeviation="1.500"/></filter></defs>
 <g fill="#000" stroke="#000" opacity="0.350" filter="url(#ash)" transform="translate(3 3)">
  <path d="M998.100 176.600L1077 198" stroke-width="2.500"/><polygon points="1087.400,201.200 1070.400,203.800 1077.200,190.500"/>
  <path d="M990.800 177.800L1017 282" stroke-width="2.500"/><polygon points="1020.200,293.500 1010.300,282.400 1024.100,279.300"/>
 </g>
 <g fill="#c00000" stroke="#c00000">
  <path d="M998.100 176.600L1077 198.300" stroke-width="2.500"/><polygon points="1087.400,201.200 1070.400,203.800 1077.200,190.500" stroke-width="0.500"/>
  <path d="M990.800 177.800L1017 282" stroke-width="2.500"/><polygon points="1020.200,293.500 1010.300,282.400 1024.100,279.300" stroke-width="0.500"/>
 </g>
</svg>
</body>
</html>
